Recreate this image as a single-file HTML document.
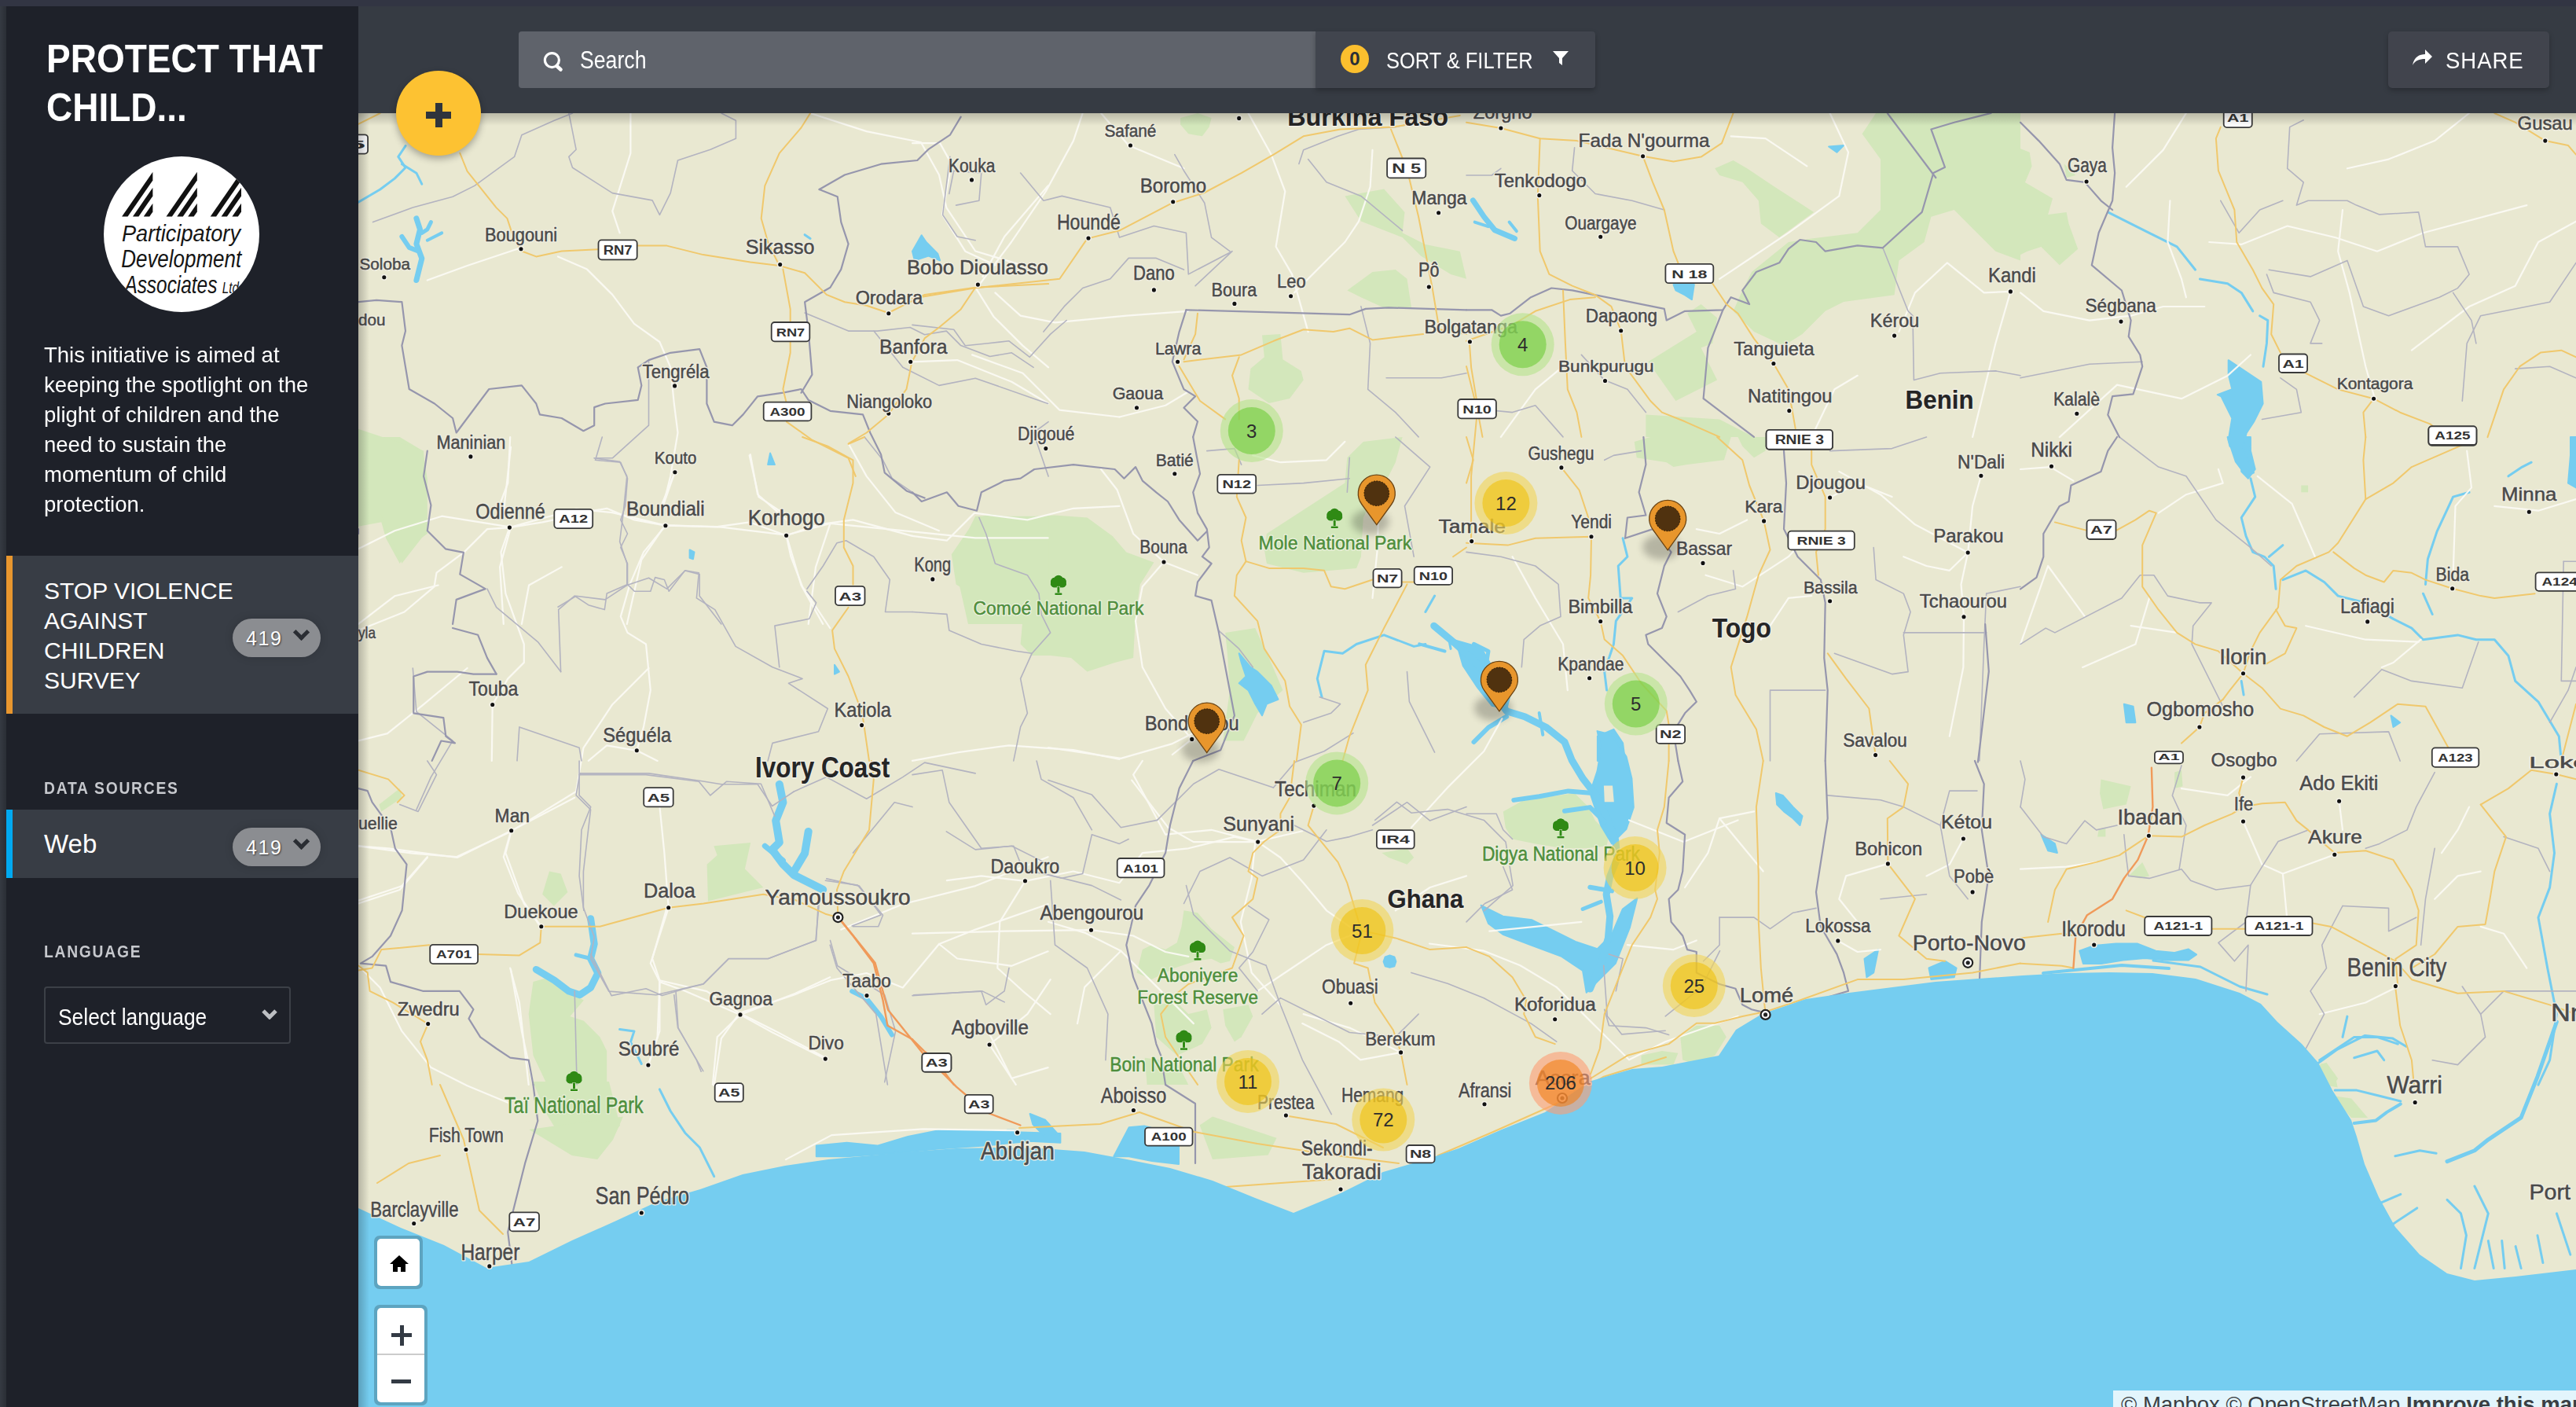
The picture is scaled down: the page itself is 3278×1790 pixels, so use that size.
<!DOCTYPE html>
<html><head><meta charset="utf-8">
<style>
*{margin:0;padding:0;box-sizing:border-box}
html,body{width:3278px;height:1790px;overflow:hidden;background:#323543;font-family:"Liberation Sans",sans-serif}
#lstrip{position:absolute;left:0;top:8px;width:8px;height:1782px;background:linear-gradient(90deg,#353a42,#2a2e35)}
#side{position:absolute;left:8px;top:8px;width:448px;height:1782px;background:#1e2129;color:#fff;z-index:5}
#topbar{position:absolute;left:456px;top:8px;width:2822px;height:136px;background:#363b43;z-index:4}
#map{position:absolute;left:456px;top:144px;width:2822px;height:1646px;background:#ebe8d6;overflow:hidden}
#mapsvg{position:absolute;left:0;top:0}
.t{position:absolute;white-space:nowrap}
.badge{position:absolute;width:112px;height:49px;border-radius:25px;background:#8b8d91;box-shadow:0 0 12px rgba(0,0,0,.15)}
.badge span{position:absolute;left:17px;top:10px;font-size:25px;line-height:30px;color:#fff;text-shadow:1px 1px 2px rgba(0,0,0,.6);letter-spacing:1.6px}
.badge i{position:absolute;left:77px;top:13px;width:20px;height:14px;background:none}
.badge i:before{content:"";position:absolute;left:3px;top:-3px;width:10px;height:10px;border-right:5px solid #2a2d33;border-bottom:5px solid #2a2d33;transform:rotate(45deg)}
.lbl{font-size:22px;font-weight:bold;color:#c6c8cd;letter-spacing:2px;line-height:28px;transform:scaleX(0.876);transform-origin:0 0}

</style></head><body>
<div id="lstrip"></div>
<div id="side">
<div class="t" id="title" style="left:51px;top:36px;font-size:50px;font-weight:bold;line-height:62px;transform:scaleX(0.92);transform-origin:0 0">PROTECT THAT<br>CHILD...</div>
<div id="logo" style="position:absolute;left:124px;top:191px;width:198px;height:198px;border-radius:50%;background:#fff;overflow:hidden">
<svg width="198" height="198" viewBox="132 199 198 198" style="position:absolute;left:0;top:0" font-family="Liberation Sans, sans-serif" font-style="italic">
<g fill="#111"><polygon points="155.1,275.5 194.4,218.7 194.4,229.4 162.5,275.5"/><polygon points="169.0,275.5 194.4,238.7 194.4,249.4 176.4,275.5"/><polygon points="182.8,275.5 194.4,258.7 194.4,269.4 190.2,275.5"/><polygon points="211.5,275.5 250.8,218.7 250.8,229.4 218.9,275.5"/><polygon points="225.3,275.5 250.8,238.7 250.8,249.4 232.8,275.5"/><polygon points="239.2,275.5 250.8,258.7 250.8,269.4 246.6,275.5"/><polygon points="267.7,275.5 307.0,218.7 307.0,229.4 275.1,275.5"/><polygon points="281.6,275.5 307.0,238.7 307.0,249.4 288.9,275.5"/><polygon points="295.4,275.5 307.0,258.7 307.0,269.4 302.8,275.5"/></g>
<text x="155" y="306.6" font-size="29" fill="#151515" textLength="151" lengthAdjust="spacingAndGlyphs">Participatory</text>
<text x="154.2" y="340" font-size="31" fill="#151515" textLength="153" lengthAdjust="spacingAndGlyphs">Development</text>
<text x="158.4" y="372.7" font-size="32" fill="#151515" textLength="118" lengthAdjust="spacingAndGlyphs">Associates</text>
<text x="282.8" y="372.7" font-size="20" fill="#151515" textLength="21" lengthAdjust="spacingAndGlyphs">Ltd</text>
</svg>
</div>
<div class="t" id="desc" style="left:48px;top:425px;font-size:28px;line-height:38px;transform:scaleX(0.982);transform-origin:0 0">This initiative is aimed at<br>keeping the spotlight on the<br>plight of children and the<br>need to sustain the<br>momentum of child<br>protection.</div>
<div id="cat" style="position:absolute;left:0;top:699px;width:448px;height:201px;background:#383d45;border-left:8px solid #e8962e"></div>
<div class="t" id="cattxt" style="left:48px;top:725px;font-size:30px;line-height:38px">STOP VIOLENCE<br>AGAINST<br>CHILDREN<br>SURVEY</div>
<div class="badge" style="left:288px;top:779px"><span>419</span><i></i></div>
<div class="t lbl" style="left:48px;top:981px">DATA SOURCES</div>
<div id="web" style="position:absolute;left:0;top:1022px;width:448px;height:87px;background:#383d45;border-left:8px solid #00a9f1"></div>
<div class="t" style="left:48px;top:1047px;font-size:33px;line-height:38px">Web</div>
<div class="badge" style="left:288px;top:1045px"><span>419</span><i></i></div>
<div class="t lbl" style="left:48px;top:1189px">LANGUAGE</div>
<div id="sel" style="position:absolute;left:48px;top:1247px;width:314px;height:73px;border:2px solid #3c4047;border-radius:4px"></div>
<div class="t" style="left:66px;top:1269px;font-size:29px;line-height:34px;transform:scaleX(0.91);transform-origin:0 0">Select language</div>
<svg style="position:absolute;left:325px;top:1275px" width="20" height="14" viewBox="0 0 20 14"><path d="M2,3 L10,11 L18,3" stroke="#bdbfc3" stroke-width="5" fill="none"/></svg>
</div>
<div id="topbar">
<div id="search" style="position:absolute;left:204px;top:32px;width:1014px;height:72px;background:#5f636b;border-radius:4px 0 0 4px"></div>
<svg style="position:absolute;left:234px;top:56.5px" width="28" height="28" viewBox="0 0 28 28"><circle cx="12.4" cy="11.6" r="9" stroke="#fff" stroke-width="3.2" fill="none"/><path d="M18.5,19 L23.5,23.5" stroke="#fff" stroke-width="4.6" stroke-linecap="round"/></svg>
<div class="t" style="left:282px;top:52px;font-size:31px;line-height:34px;color:#fff;transform:scaleX(0.86);transform-origin:0 0">Search</div>
<div id="sortf" style="position:absolute;left:1218px;top:32px;width:356px;height:72px;background:#41454e;border-radius:0 4px 4px 0;box-shadow:0 3px 6px rgba(0,0,0,.25)"></div>
<div style="position:absolute;left:1250px;top:49px;width:36px;height:36px;border-radius:50%;background:#fbbf2e;color:#2b2f36;font-weight:bold;font-size:24px;line-height:36px;text-align:center">0</div>
<div class="t" style="left:1308px;top:52px;font-size:29px;line-height:34px;color:#fff;transform:scaleX(0.877);transform-origin:0 0">SORT &amp; FILTER</div>
<svg style="position:absolute;left:1519px;top:57px" width="22" height="20" viewBox="0 0 22 20"><path d="M1,0 L21,0 L13,9 L13,18 L9,15 L9,9 Z" fill="#fff"/></svg>
<div id="share" style="position:absolute;left:2583px;top:32px;width:205px;height:72px;background:#41444d;border-radius:5px;box-shadow:0 3px 6px rgba(0,0,0,.25)"></div>
<svg style="position:absolute;left:2614px;top:54px" width="26" height="22" viewBox="0 0 26 22"><path d="M0,21 C2,10 9,7 16,7 L16,1 L25,10 L16,19 L16,13 C9,13 3,15 0,21 Z" fill="#fff"/></svg>
<div class="t" style="left:2656px;top:52px;font-size:29px;line-height:34px;color:#fff;letter-spacing:1px;transform:scaleX(0.95);transform-origin:0 0">SHARE</div>
</div>
<div id="fab" style="position:absolute;left:504px;top:90px;width:108px;height:108px;border-radius:50%;background:#fdc232;z-index:6;box-shadow:0 4px 10px rgba(0,0,0,.3)">
<div style="position:absolute;left:38px;top:52px;width:32px;height:9px;background:#2f343c"></div>
<div style="position:absolute;left:49.5px;top:41px;width:9px;height:31px;background:#2f343c"></div>
</div>
<div id="map">
<svg id="mapsvg" width="2822" height="1646" viewBox="456 144 2822 1646">
<defs><filter id="blur4" x="-50%" y="-50%" width="200%" height="200%"><feGaussianBlur stdDeviation="5"/></filter><linearGradient id="topsh" x1="0" y1="0" x2="0" y2="1"><stop offset="0" stop-color="#000" stop-opacity=".2"/><stop offset="1" stop-color="#000" stop-opacity="0"/></linearGradient><linearGradient id="leftsh" x1="0" y1="0" x2="1" y2="0"><stop offset="0" stop-color="#000" stop-opacity=".22"/><stop offset="1" stop-color="#000" stop-opacity="0"/></linearGradient></defs>
<rect x="456" y="144" width="2822" height="1646" fill="#e9e8d1"/>
<g fill="#d3e7bb">
<polygon points="1502.1,149.9 1524.0,144.0 1541.6,149.9 1538.7,161.6 1529.9,173.3 1512.3,170.3 1502.1,158.6"/>
<polygon points="1711.4,249.4 1761.2,240.6 1787.5,269.9 1784.6,296.2 1813.9,310.9 1857.8,319.7 1866.0,354.8 1846.1,348.9 1808.0,325.5 1784.6,302.1 1731.9,281.6"/>
<polygon points="1714.3,369.4 1746.5,346.0 1775.8,343.1 1790.5,354.8 1796.3,392.9 1764.1,392.9 1731.9,378.2"/>
<polygon points="1606.0,426.5 1629.4,425.1 1632.4,457.3 1655.8,471.9 1658.7,483.6 1641.1,507.0 1614.8,512.9 1588.5,495.3 1591.4,469.0 1608.9,454.3"/>
<polygon points="2182.2,214.3 2205.6,204.0 2223.2,214.3 2258.3,237.7 2308.1,269.9 2264.2,302.1 2240.8,284.5 2237.8,255.3 2217.3,231.8 2188.1,223.0"/>
<polygon points="2229.0,346.0 2275.9,308.0 2305.2,303.6 2363.7,296.2 2393.0,267.0 2393.0,202.6 2369.6,170.3 2387.1,144.0 2571.0,144.0 2571.0,331.4 2539.4,319.7 2510.1,290.4 2486.7,267.0 2457.4,275.7 2448.6,308.0 2416.4,331.4 2410.6,375.3 2346.1,384.1 2322.7,395.8 2293.5,425.1 2270.0,439.7 2232.0,422.1 2205.6,395.8 2217.3,369.4"/>
<polygon points="2147.1,398.7 2164.6,387.0 2185.1,404.6 2179.3,436.8 2164.6,442.6 2185.1,483.6 2132.4,510.0 2097.3,460.2 2158.8,422.1"/>
<polygon points="2094.4,527.5 2188.1,533.4 2232.0,555.9 2094.4,555.9"/>
<polygon points="2568.1,187.9 2582.7,193.8 2585.6,211.4 2576.9,231.9 2612.0,252.4 2606.1,272.9 2629.6,269.9 2632.5,284.6 2644.2,316.8 2620.8,337.3 2597.4,313.9 2579.8,319.7 2568.1,325.6"/>
<polygon points="2626.6,208.4 2641.3,223.1 2629.6,226.0"/>
<polygon points="453.1,556.0 508.7,556.0 538.0,573.6 543.8,608.7 543.8,679.0 523.3,693.6 508.7,717.0 491.1,684.8 485.3,664.3 453.1,670.2"/>
<polygon points="1210.8,705.3 1243.0,658.5 1260.5,654.1 1292.7,658.5 1342.5,655.5 1383.5,658.5 1415.7,681.9 1433.3,702.4 1468.4,715.6 1450.8,743.4 1445.0,784.4 1442.1,837.1 1418.6,842.9 1383.5,854.6 1363.0,837.1 1336.7,834.1 1313.2,834.1 1298.6,819.5 1301.5,787.3 1286.9,766.8 1278.1,758.0 1240.0,758.0 1216.6,743.4"/>
<polygon points="1611.9,679.0 1711.4,614.6 1714.3,582.3 1734.8,561.9 1784.6,556.0 1775.8,588.2 1767.0,605.8 1749.5,629.2 1734.8,658.5 1731.9,708.2 1726.1,722.9 1658.7,728.7 1611.9,717.0 1608.9,699.5"/>
<polygon points="1559.2,804.9 1597.2,799.0 1614.8,837.1 1632.4,878.1 1600.2,907.3 1582.6,942.5 1556.2,942.5 1565.0,878.1 1562.1,834.1"/>
<polygon points="2079.7,561.9 2100.2,556.0 2202.7,556.0 2193.9,585.3 2147.1,591.1 2129.5,594.1 2120.7,588.2 2082.7,582.3"/>
<polygon points="2211.5,556.0 2246.6,556.0 2246.6,573.6 2232.0,582.3 2217.3,567.7"/>
<polygon points="2928.3,617.5 2937.1,617.5 2937.1,626.3 2928.3,626.3"/>
<polygon points="908.3,1076.3 955.2,1071.9 947.9,1105.6 971.3,1129.0 901.0,1146.6 899.6,1099.7 912.7,1088.0"/>
<polygon points="699.0,1108.5 713.6,1111.5 722.4,1134.9 704.9,1152.4 690.2,1137.8"/>
<polygon points="678.5,1249.1 699.0,1243.2 719.5,1260.8 742.9,1272.5 725.4,1293.0 742.9,1298.8 763.4,1319.3 772.2,1336.9 772.2,1379.9 696.1,1379.9 678.5,1342.8 672.7,1290.1"/>
<polygon points="482.3,1023.6 508.7,1003.1 511.6,1014.8 485.3,1032.4"/>
<polygon points="1506.5,1158.3 1524.0,1161.2 1541.6,1181.7 1570.9,1205.1 1565.0,1222.7 1553.3,1225.6 1541.6,1219.8 1521.1,1222.7 1494.8,1231.5 1465.5,1246.1 1446.5,1237.4 1453.8,1208.1 1465.5,1202.2 1483.1,1208.1 1497.7,1199.3 1503.5,1178.8"/>
<polygon points="1468.4,1278.3 1497.7,1275.4 1512.3,1290.1 1535.8,1284.2 1541.6,1307.6 1529.9,1328.1 1497.7,1342.8 1471.3,1319.3"/>
<polygon points="1556.2,1284.2 1588.5,1278.3 1594.3,1293.0 1579.7,1319.3 1570.9,1325.2 1559.2,1304.7"/>
<polygon points="1456.7,1345.7 1497.7,1351.5 1512.3,1379.9 1459.6,1379.9"/>
<polygon points="1758.3,1085.1 1790.5,1079.3 1799.2,1091.0 1790.5,1099.7 1767.0,1091.0"/>
<polygon points="1912.8,1032.4 1939.2,1017.8 1983.1,1011.9 2003.6,1009.0 2021.2,1026.6 2030.0,1044.1 2047.5,1061.7 2044.6,1076.3 2018.2,1079.3 1989.0,1079.3 1953.8,1073.4 1924.6,1067.5 1915.8,1052.9"/>
<polygon points="2138.3,1319.3 2158.8,1304.7 2188.1,1304.7 2196.8,1319.3 2182.2,1342.8 2158.8,1354.5 2141.2,1348.6"/>
<polygon points="2088.5,1342.8 2114.9,1336.9 2135.4,1339.8 2129.5,1354.5 2088.5,1354.5"/>
<polygon points="2673.5,991.4 2711.6,1000.2 2705.7,1023.6 2676.4,1029.5 2672.0,1009.0"/>
<polygon points="2708.7,1114.4 2726.2,1096.9 2735.0,1114.4 2723.3,1117.4"/>
<polygon points="2670.6,1055.9 2679.4,1052.9 2679.4,1064.6 2669.1,1064.6"/>
<polygon points="2767.2,982.6 2776.0,979.7 2777.5,1000.2 2767.2,1003.1"/>
<polygon points="2951.7,1354.6 2960.5,1351.7 2975.2,1372.2 2969.3,1380.1 2951.7,1380.1"/>
<polygon points="456.0,545.8 539.1,573.6 543.8,675.2 511.4,716.7 483.7,652.1 456.0,652.1"/>
<polygon points="1241.2,656.7 1334.1,656.7 1334.1,793.9 1232.0,793.9 1213.5,712.1"/>
<polygon points="678.0,1376.0 775.0,1376.0 789.0,1432.0 756.0,1469.0 724.0,1464.0 696.0,1418.0"/>
<polygon points="1526.6,1431.5 1543.0,1420.6 1624.5,1447.8 1613.6,1469.6 1543.0,1475.0"/>
<polygon points="673.4,1437.0 793.0,1420.6 780.0,1450.0 760.3,1475.0 727.7,1470.0"/>
<polygon points="2953.8,1352.2 2971.2,1366.2 2974.7,1383.6 2957.3,1380.1"/>
<polygon points="2967.7,1394.0 2992.1,1397.5 3013.0,1421.9 2992.1,1421.9"/>
</g>
<g fill="#75cdf0" stroke="#75cdf0" stroke-width="2" stroke-linejoin="round">
<polygon points="1161.0,319.7 1172.7,299.2 1178.6,308.0 1193.2,322.6 1196.1,331.4 1181.5,325.5 1163.9,331.4"/>
<polygon points="2129.5,362.1 2155.8,362.1 2152.9,381.1 2144.1,375.3 2132.4,369.4"/>
<polygon points="2327.1,186.5 2346.1,185.0 2337.4,193.8"/>
<polygon points="877.6,699.5 883.5,702.4 882.0,711.2 877.6,709.7"/>
<polygon points="980.1,576.5 985.9,591.1 977.1,591.1"/>
<polygon points="1062.0,845.8 1067.9,854.6 1062.0,857.6"/>
<polygon points="1576.7,831.2 1591.4,848.8 1600.2,854.6 1617.7,872.2 1626.5,889.8 1611.9,895.6 1606.0,910.3 1597.2,895.6 1588.5,878.1 1576.7,869.3 1585.5,860.5 1579.7,842.9"/>
<polygon points="2032.9,936.6 2053.4,927.8 2065.1,945.4 2068.0,967.9 2032.9,967.9"/>
<polygon points="2834.6,556.0 2863.9,556.0 2863.9,573.6 2869.7,597.0 2860.9,608.7 2852.2,599.9 2852.2,579.4 2837.5,567.7"/>
<polygon points="3271.0,556.0 3278.0,556.0 3278.0,620.4 3268.0,614.6 3271.0,579.4"/>
<polygon points="2702.8,895.7 2714.5,898.7 2717.4,919.2 2705.7,919.2"/>
<polygon points="3042.5,910.4 3054.2,919.2 3045.5,925.0"/>
<polygon points="1768.5,1215.4 1774.4,1217.4 1776.4,1223.3 1774.4,1229.2 1768.5,1230.9 1762.7,1229.2 1760.6,1223.3 1762.7,1217.4"/>
<polygon points="2259.8,1009.0 2268.6,1011.9 2281.7,1026.6 2293.5,1038.3 2290.5,1050.0 2281.7,1041.2 2270.0,1032.4 2261.2,1023.6"/>
<polygon points="2454.5,1231.5 2475.0,1222.7 2489.6,1231.5 2486.7,1243.2 2457.4,1246.1"/>
<polygon points="2372.5,1219.8 2390.1,1208.1 2384.2,1237.4 2375.4,1243.2"/>
<polygon points="2597.4,1061.7 2614.9,1073.4 2617.9,1085.1 2606.1,1082.2"/>
<polygon points="1038.8,1457.6 1077.6,1453.8 1116.5,1457.6 1155.3,1446.0 1194.1,1438.2 1252.3,1438.2 1291.1,1440.2 1349.4,1442.1 1349.4,1453.8 1310.6,1451.8 1252.3,1457.6 1194.1,1461.5 1135.9,1467.3 1077.6,1471.2 1038.8,1471.2"/>
<polygon points="1417.3,1471.2 1436.7,1434.3 1456.1,1432.4 1500.0,1444.1 1500.0,1480.9 1465.8,1477.0 1436.7,1471.2"/>
<polygon points="1310.6,1416.9 1330.0,1424.6 1347.4,1444.1 1330.0,1446.0 1314.4,1430.5"/>
<polygon points="2835.7,458.2 2849.6,467.4 2877.3,485.9 2879.6,513.6 2868.0,536.7 2858.8,550.6 2854.2,569.0 2868.0,601.4 2858.8,606.0 2844.9,587.5 2835.7,559.8 2840.3,532.1 2826.5,504.4 2821.8,502.1 2840.3,495.1 2835.7,476.6"/>
<polygon points="2646.3,1209.8 2664.8,1202.9 2692.5,1200.6 2720.2,1200.6 2743.3,1209.8 2766.4,1212.1 2784.9,1207.5 2795.0,1214.4 2784.9,1221.4 2757.2,1221.4 2729.4,1219.0 2701.7,1221.4 2674.0,1226.0 2650.9,1226.0"/>
<polygon points="1852.4,814.7 1884.8,823.9 1903.2,856.2 1921.7,883.9 1917.1,902.4 1898.6,897.8 1880.1,874.7 1861.7,847.0"/>
<polygon points="2032.6,930.1 2051.0,934.8 2069.5,962.5 2076.4,990.2 2078.8,1027.1 2069.5,1054.8 2051.0,1073.3 2037.2,1050.2 2023.3,1008.7 2032.6,980.9 2037.2,953.2"/>
<polygon points="1884.8,1151.8 1912.5,1165.7 1949.4,1170.3 1977.1,1184.2 2004.8,1198.0 2032.6,1207.3 2051.0,1188.8 2064.9,1156.5 2083.4,1142.6 2074.1,1179.6 2055.7,1225.8 2032.6,1248.8 2018.7,1262.7 2014.1,1235.0 1986.4,1216.5 1949.4,1202.7 1912.5,1188.8 1894.0,1174.9"/>
<polygon fill="#e9e8d1" stroke="none" points="2040.9,999.4 2052.0,999.4 2053.8,1020.2 2041.8,1020.2"/>
</g>
<g fill="none" stroke="#75cdf0" stroke-linecap="round" stroke-linejoin="round">
<polyline stroke-width="9" points="1824.7,796.2 1852.4,819.3 1875.5,840.1 1894.0,860.9 1905.5,888.6 1917.1,904.7 1940.2,911.7 1967.9,925.5 1991.0,944.0 2000.2,967.1 2014.1,990.2 2030.3,1011.0 2044.1,1038.7 2055.7,1068.7 2058.0,1091.8 2048.7,1114.9 2044.1,1138.0 2048.7,1165.7 2046.4,1193.4 2037.2,1225.8 2023.3,1258.1"/>
<polyline stroke-width="4" points="1806.2,819.3 1838.6,828.5"/>
<polyline stroke-width="5" points="1875.5,819.3 1894.0,828.5 1889.4,856.2"/>
<polyline stroke-width="6" points="1875.5,944.0 1894.0,925.5 1917.1,911.7"/>
<polyline stroke-width="4" points="1958.7,907.0 1963.3,934.8"/>
<polyline stroke-width="6" points="1926.3,1017.9 1958.7,1013.3 1995.6,1006.4 2023.3,1008.7"/>
<polyline stroke-width="6" points="1991.0,1031.8 2023.3,1027.1 2041.8,1045.6"/>
<polyline stroke-width="6" points="2023.3,1128.8 2051.0,1133.4"/>
<polyline stroke-width="5" points="2014.1,1156.5 2037.2,1147.2"/>
<polyline stroke-width="4" points="2600.0,1238.0 2700.0,1228.0 2760.0,1232.0"/>
<polyline stroke-width="3" points="2950.3,1352.2 2974.7,1334.8 3009.5,1317.4 3044.4,1320.9 3061.8,1331.3"/>
<polyline stroke-width="3" points="2971.2,1387.1 2999.1,1387.1 3027.0,1394.0 3054.8,1401.0"/>
<polyline stroke-width="4" points="2995.6,1428.9 3023.5,1425.4 3037.4,1414.9 3054.8,1404.5"/>
<polyline stroke-width="3" points="3047.9,1470.7 3079.2,1463.7 3100.1,1467.2"/>
<polyline stroke-width="3" points="3030.4,1529.9 3054.8,1519.4"/>
<polyline stroke-width="3" points="3044.4,1557.7 3075.7,1536.9"/>
<polyline stroke-width="3" points="3114.0,1526.4 3131.5,1543.8 3138.4,1571.7 3131.5,1613.5"/>
<polyline stroke-width="3" points="3148.9,1509.0 3166.3,1543.8 3148.9,1613.5"/>
<polyline stroke-width="3" points="3166.3,1578.6 3173.2,1613.5"/>
<polyline stroke-width="3" points="3183.7,1578.6 3187.2,1613.5"/>
<polyline stroke-width="3" points="3201.1,1585.6 3208.1,1613.5"/>
<polyline stroke-width="3" points="3229.0,1571.7 3235.9,1606.5"/>
<polyline stroke-width="3" points="3253.4,1543.8 3270.8,1596.1"/>
<polyline stroke-width="5" points="3253.4,1300.0 3229.0,1369.7 3208.1,1421.9 3166.3,1449.8 3148.9,1463.7 3114.0,1477.6"/>
<polyline stroke-width="3" points="2740.0,1222.0 2800.0,1230.0 2850.0,1255.0 2885.0,1265.0"/>
<polyline stroke-width="7" points="529.9,277.9 534.5,291.8 529.9,310.3 536.8,328.8 529.9,356.5"/>
<polyline stroke-width="6" points="511.4,301.0 520.7,314.9 532.2,319.5"/>
<polyline stroke-width="5" points="548.4,282.6 543.8,291.8 536.8,296.4"/>
<polyline stroke-width="4" points="562.2,296.4 543.8,305.7"/>
<polyline stroke-width="7" points="1874.4,254.9 1888.3,275.6 1902.1,292.7 1927.5,303.4"/>
<polyline stroke-width="4" points="1876.7,282.6 1893.8,288.1"/>
<polyline stroke-width="4" points="1920.6,282.6 1929.8,294.1"/>
<polyline stroke-width="10" points="991.8,997.8 996.4,1020.9 987.2,1044.0 991.8,1071.7 982.6,1080.9 996.4,1099.4 1010.3,1113.3 1028.7,1122.5 1047.2,1131.8"/>
<polyline stroke-width="10" points="1028.7,1057.9 1024.1,1085.6 1010.3,1108.7"/>
<polyline stroke-width="7" points="973.3,1076.3 996.4,1094.8"/>
<polyline stroke-width="9" points="751.6,1168.7 756.2,1201.0 751.6,1219.5 760.8,1238.0 751.6,1256.5 737.8,1265.7 723.9,1261.1 705.4,1247.2 682.3,1233.4"/>
<polyline stroke-width="5" points="733.1,1214.9 751.6,1219.5"/>
<polyline stroke-width="6" points="1084.2,1261.1 1102.7,1270.3 1121.1,1293.4 1135.0,1316.5"/>
<polyline stroke-width="3" points="788.6,1309.6 807.0,1311.9 802.4,1325.8 811.7,1344.2 816.3,1353.5"/>
<polyline stroke-width="3" points="839.4,1385.8 853.2,1413.5 871.7,1441.2 890.2,1459.7 908.7,1496.7"/>
<polyline stroke-width="3" points="1281.4,1438.2 1291.1,1438.2"/>
<polyline stroke-width="3" points="2682.3,269.9 2711.6,284.6 2735.0,296.3 2770.2,313.9 2793.6,343.2"/>
<polyline stroke-width="3" points="2799.4,354.9 2834.6,360.7 2852.2,372.4 2866.8,395.9"/>
<polyline stroke-width="3" points="2875.6,401.7 2885.8,407.6 2884.4,436.9 2880.0,466.2"/>
<polyline stroke-width="3" points="1682.1,886.8 1676.3,863.4 1685.1,828.3 1708.5,831.2 1726.1,819.5 1761.2,807.8 1799.2,822.4 1813.9,819.5"/>
<polyline stroke-width="3" points="1813.9,778.5 1825.6,758.0"/>
<polyline stroke-width="3" points="1825.6,796.1 1843.2,810.7 1846.1,825.4"/>
<polyline stroke-width="3" points="2065.1,684.8 2070.9,708.2 2059.2,720.0 2062.2,760.9 2076.8,760.9 2056.3,790.2 2053.4,819.5 2041.7,854.6 2044.6,878.1"/>
<polyline stroke-width="3" points="2863.9,608.7 2869.7,632.1 2852.2,658.5 2858.0,681.9 2866.8,702.4 2881.4,708.3 2893.2,720.0 2896.1,749.3"/>
<polyline stroke-width="3" points="2887.3,708.3 2904.9,693.7"/>
<polyline stroke-width="3" points="2904.9,737.6 2934.2,725.9 2957.6,740.5 2975.2,758.1 3010.3,766.9 3045.5,787.4 3068.9,799.1 3083.5,813.7 3127.5,807.9 3150.9,813.7 3174.3,813.7 3191.9,834.2 3200.7,866.4 3230.0,892.8 3256.3,936.7 3259.3,968.1"/>
<polyline stroke-width="3" points="3142.1,626.3 3121.6,632.1 3101.1,676.1 3089.4,711.2 3086.5,743.4"/>
<polyline stroke-width="3" points="3083.5,755.2 3095.2,781.5"/>
<polyline stroke-width="3" points="3191.9,605.8 3209.5,594.1 3221.2,588.2"/>
<polyline stroke-width="3" points="2852.2,866.4 2855.1,884.0"/>
<polyline stroke-width="3" points="3253.4,997.3 3244.6,1035.4 3250.5,1085.1 3244.6,1129.1 3230.0,1167.2 3241.7,1231.6 3253.4,1290.2 3244.6,1348.7 3230.0,1380.1"/>
<polyline stroke-width="3" points="2951.7,1348.7 2995.7,1319.4 3025.0,1319.4 3051.3,1328.2"/>
<polyline stroke-width="3" points="2986.9,1293.1 2981.0,1319.4"/>
<polyline stroke-width="3" points="2995.7,1345.8 3025.0,1337.0 3033.7,1348.7"/>
<polyline stroke-width="3" points="516.0,185.6 506.8,199.4 516.0,213.3 502.2,227.1 483.7,241.0 456.0,257.2"/>
<polyline stroke-width="3" points="511.4,208.7 529.9,220.2 536.8,234.1"/>
<polyline stroke-width="3" points="1024.1,298.7 1031.1,303.4"/>
</g>
<g fill="none" stroke-linecap="round" stroke-linejoin="round">
<g stroke="#fbfaf4" stroke-width="2.2" opacity=".95">
<polyline points="1377.7,144.0 1365.9,179.1 1330.8,243.5 1286.9,308.0 1243.0,366.5"/>
<polyline points="1266.4,372.4 1298.6,401.6 1342.5,410.4 1433.3,401.6 1512.3,395.8"/>
<polyline points="1588.5,144.0 1617.7,196.7 1635.3,243.5 1623.6,313.8 1644.1,348.9 1664.6,422.1"/>
<polyline points="1647.0,372.4 1693.8,325.5 1711.4,308.0 1729.0,281.6 1743.6,237.7 1746.5,190.8"/>
<polyline points="1161.0,182.1 1196.1,182.1 1210.8,208.4 1199.1,272.8 1228.3,319.7 1266.4,337.2"/>
<polyline points="1401.1,144.0 1436.2,185.0 1506.5,214.3"/>
<polyline points="1424.5,530.5 1483.1,515.8 1512.3,498.3"/>
<polyline points="1237.1,451.4 1301.5,474.8 1348.4,521.7 1424.5,530.5"/>
<polyline points="2188.1,354.8 2232.0,325.5 2275.9,296.2 2340.3,249.4 2352.0,193.8 2328.6,144.0"/>
<polyline points="2416.4,422.1 2436.9,372.4 2477.9,334.3 2524.7,372.4 2558.4,370.9 2539.4,436.8 2510.1,555.9"/>
<polyline points="2202.7,173.3 2246.6,176.2 2299.3,211.3"/>
<polyline points="1909.9,555.9 1953.8,495.3 1989.0,466.1"/>
<polyline points="2305.2,555.9 2334.4,495.3 2363.7,477.8"/>
<polyline points="2571.0,372.4 2600.3,395.9 2658.9,407.6 2711.6,401.7 2752.6,390.0 2805.3,390.0"/>
<polyline points="2705.7,237.7 2752.6,190.9 2781.9,144.0"/>
<polyline points="2761.4,255.3 2758.4,308.0 2776.0,354.9 2781.9,378.3"/>
<polyline points="2811.2,308.0 2852.2,310.9 2910.7,287.5 2972.2,302.2 3025.0,319.7 3083.5,296.3 3215.3,261.1"/>
<polyline points="2986.9,214.3 3039.6,202.6 3098.2,179.1 3142.1,144.0"/>
<polyline points="2981.0,267.0 2975.2,319.7 2989.8,372.4 3010.3,466.2 3022.0,507.2"/>
<polyline points="3278.0,281.7 3230.0,308.0 3200.7,363.7 3142.1,390.0 3068.9,445.7"/>
<polyline points="2620.8,556.1 2694.0,489.6 2776.0,507.2 2834.6,477.9 2863.9,451.5"/>
<polyline points="456.0,801.9 514.6,778.5 552.6,746.3 555.5,728.7 590.7,702.4 620.0,673.1 648.4,671.1 690.2,664.3 704.9,661.4"/>
<polyline points="755.2,649.7 772.2,646.8 807.3,661.4 846.9,668.7 912.7,670.2 953.7,664.3 1000.6,681.3 1041.5,667.3 1085.5,661.4 1161.0,681.9"/>
<polyline points="648.4,671.1 637.5,702.4 643.4,755.1 666.8,819.5 666.8,842.9 646.3,863.4 626.7,896.5 625.8,967.9"/>
<polyline points="846.9,668.7 819.0,702.4 801.5,743.4 789.8,784.4 798.5,804.9 822.0,819.5 827.8,878.1 819.0,924.9 810.3,954.8"/>
<polyline points="858.9,600.8 842.5,640.9"/>
<polyline points="1000.6,681.3 1006.4,708.2 1021.1,746.3 1056.2,799.0"/>
<polyline points="953.7,579.4 965.4,632.1 991.8,649.7"/>
<polyline points="649.2,556.0 646.3,614.6 637.5,638.0"/>
<polyline points="748.8,967.9 772.2,948.3 810.3,954.8 836.6,967.9"/>
<polyline points="1161.0,681.9 1204.9,687.7 1240.0,652.6 1307.4,661.4 1365.9,646.8 1424.5,643.8"/>
<polyline points="1401.1,597.0 1421.6,623.3 1442.1,679.0 1481.0,715.0 1524.0,731.7"/>
<polyline points="1481.0,715.0 1453.8,746.3 1445.0,790.2 1453.8,848.8 1483.1,901.5 1516.7,940.4"/>
<polyline points="1161.0,967.9 1219.6,957.1 1284.0,948.3 1365.9,954.2 1424.5,965.9"/>
<polyline points="1516.7,940.4 1491.8,960.0"/>
<polyline points="1594.3,579.4 1629.4,588.2 1688.0,585.3 1711.4,561.9"/>
<polyline points="1755.3,629.2 1752.4,702.4 1746.5,760.9"/>
<polyline points="2158.8,673.1 2188.1,679.0 2223.2,661.4"/>
<polyline points="2170.5,731.7 2217.3,746.3 2275.9,708.2 2305.2,676.0"/>
<polyline points="2340.3,599.9 2393.0,629.2 2436.9,667.3 2504.2,703.0"/>
<polyline points="2504.2,703.0 2480.8,725.8 2451.5,720.0 2422.3,708.2"/>
<polyline points="2504.2,703.0 2495.5,743.4 2499.0,784.7 2498.4,848.8 2480.8,936.6"/>
<polyline points="2328.6,633.0 2363.7,614.6 2407.6,632.1"/>
<polyline points="2520.9,605.2 2510.1,643.8 2504.2,703.0"/>
<polyline points="1924.6,708.2 1953.8,760.9 1989.0,819.5 1994.8,878.1"/>
<polyline points="2240.8,813.6 2275.9,760.9 2305.2,758.0"/>
<polyline points="2571.0,597.0 2609.1,594.1 2638.4,611.6"/>
<polyline points="2746.7,652.6 2781.9,629.2 2828.7,614.6 2822.9,597.0"/>
<polyline points="2872.7,605.8 2916.6,640.9 2945.9,708.3"/>
<polyline points="2571.0,819.6 2606.1,720.0 2653.0,784.4"/>
<polyline points="2711.6,796.2 2770.2,804.9"/>
<polyline points="2934.2,796.2 3010.3,813.7 3077.7,816.7"/>
<polyline points="3080.6,813.7 3045.5,843.0 3030.8,848.9"/>
<polyline points="3278.0,635.1 3230.0,649.7 3174.3,643.9"/>
<polyline points="3139.2,573.6 3145.0,620.4 3124.5,643.9 3121.6,731.7"/>
<polyline points="2650.1,848.9 2717.4,819.6 2735.0,761.0"/>
<polyline points="456.0,1076.3 494.1,1079.3 581.9,1091.0 650.7,1056.7 731.2,1014.8"/>
<polyline points="650.7,1056.7 643.4,1085.1 666.8,1149.5 688.8,1178.8"/>
<polyline points="850.7,1154.8 827.8,1225.6 839.5,1249.1 836.6,1319.3 824.9,1355.0"/>
<polyline points="839.5,1249.1 871.7,1260.8 942.0,1290.9 1012.3,1263.7 1056.2,1243.2"/>
<polyline points="942.0,1290.9 912.7,1319.3 906.9,1379.9"/>
<polyline points="1050.3,1347.1 983.0,1313.5 942.0,1290.9"/>
<polyline points="456.0,1149.5 508.7,1132.0 543.8,1091.0"/>
<polyline points="649.2,1231.5 660.9,1275.4 672.7,1379.9"/>
<polyline points="850.7,1154.8 845.4,1085.1 839.5,1026.6"/>
<polyline points="1161.0,1187.6 1278.1,1184.7 1388.5,1183.2 1442.1,1190.5 1483.1,1211.0 1512.3,1216.9"/>
<polyline points="1304.5,1120.8 1272.3,1172.9 1269.3,1231.5 1301.5,1260.8 1336.7,1290.1"/>
<polyline points="1204.9,1120.2 1248.8,1114.4 1304.5,1120.8 1365.9,1108.5 1424.5,1123.2 1453.8,1085.1 1512.3,1079.3 1570.9,1064.6 1600.7,1071.1"/>
<polyline points="1600.7,1071.1 1541.6,1055.8 1483.1,1061.7 1442.1,985.6 1453.8,968.0"/>
<polyline points="1600.7,1071.1 1629.4,1091.0 1658.7,1123.2 1688.0,1158.3 1717.3,1178.8"/>
<polyline points="1733.4,1184.1 1688.0,1202.2 1644.1,1231.5 1600.2,1260.8"/>
<polyline points="1782.6,1338.9 1717.3,1307.6 1658.7,1290.1"/>
<polyline points="1259.1,1329.0 1292.7,1379.9"/>
<polyline points="1259.1,1329.0 1307.4,1290.1 1336.7,1246.1"/>
<polyline points="1866.0,1114.4 1819.7,1129.0 1775.8,1158.3"/>
<polyline points="2188.1,1041.2 2173.4,1085.1 2144.1,1129.0"/>
<polyline points="2243.7,1108.5 2188.1,1041.2 2232.0,1032.4"/>
<polyline points="2402.4,1098.9 2349.1,1114.4 2340.3,1143.7 2363.7,1172.9"/>
<polyline points="2498.4,1067.0 2480.8,1099.7 2451.5,1114.4"/>
<polyline points="2338.8,1196.9 2363.7,1211.0 2393.0,1208.1"/>
<polyline points="1895.3,1184.7 1953.8,1178.8 2012.4,1172.9"/>
<polyline points="2070.9,1202.2 2129.5,1208.1 2158.8,1196.4"/>
<polyline points="2571.0,1105.7 2629.6,1102.7 2667.6,1096.9"/>
<polyline points="2776.0,1003.1 2834.6,1011.9 2863.9,988.5"/>
<polyline points="2854.5,1045.0 2878.5,1099.8 2904.9,1111.5 2970.8,1087.2"/>
<polyline points="2904.9,1111.5 2910.7,1173.0"/>
<polyline points="2976.6,1019.3 2981.0,1055.9"/>
<polyline points="3107.0,1085.1 3127.5,1055.9 3142.1,1026.6"/>
<polyline points="3098.2,1143.7 3127.5,1114.4 3156.7,1108.6"/>
<polyline points="3215.3,1231.6 3186.0,1187.7 3156.7,1178.9"/>
<polyline points="3051.3,1255.0 3010.3,1275.5 2951.7,1290.2"/>
<polyline points="2571.0,1255.0 2600.3,1260.9"/>
<polyline points="543.8,356.5 594.6,338.0 650.0,319.5 663.9,314.9"/>
<polyline points="710.0,326.4 747.0,342.6 779.3,374.9 807.0,411.9 839.4,435.0 853.2,467.3 857.8,513.5 862.5,550.5 853.2,605.9 844.0,642.8"/>
<polyline points="802.4,144.0 802.4,194.8 779.3,268.7 788.6,296.4"/>
<polyline points="456.0,698.3 502.2,675.2 562.2,656.7 650.0,670.6 733.1,647.5 779.3,652.1 846.3,668.2 917.9,670.6 1000.6,680.7 1056.5,665.9 1148.8,675.2 1241.2,684.4 1333.6,684.4"/>
<polyline points="650.0,670.6 636.1,721.4 640.8,793.9"/>
<polyline points="846.3,668.2 816.3,712.1 797.8,793.9"/>
<polyline points="858.8,600.4 844.0,642.8"/>
<polyline points="1000.6,680.7 1019.5,744.5 1047.2,793.9"/>
<polyline points="650.0,568.9 640.8,652.1"/>
<polyline points="954.8,578.2 964.1,629.0 1001.0,661.3"/>
<polyline points="1031.1,144.0 1102.7,167.1 1171.9,181.0 1195.0,222.5 1204.3,264.1 1241.2,319.5 1333.6,347.2"/>
<polyline points="1333.6,236.4 1278.2,301.0 1250.5,351.9"/>
<polyline points="1241.2,365.7 1264.3,402.7 1301.3,439.6 1334.1,467.3"/>
<polyline points="1160.4,460.4 1218.1,458.1 1287.4,485.8 1334.1,513.5"/>
<polyline points="1079.6,564.3 1102.7,605.9 1139.6,652.1 1195.0,675.2"/>
<polyline points="456.0,793.9 502.2,758.3 557.6,744.5"/>
<polyline points="663.9,793.9 673.1,744.5 714.7,721.4"/>
<polyline points="1056.5,665.9 1038.0,721.4 1028.7,793.9"/>
<polyline points="1334.0,951.0 1426.4,964.9 1491.0,946.4 1518.8,932.6"/>
<polyline points="1440.2,992.6 1486.4,1052.7 1518.8,1071.1 1597.3,1071.1 1657.3,1057.3"/>
<polyline points="1597.3,1071.1 1592.7,1117.3 1578.8,1172.8 1592.7,1237.4 1629.6,1279.0"/>
<polyline points="1657.3,1302.1 1703.5,1325.2 1731.2,1348.3 1782.0,1339.0"/>
<polyline points="1795.9,1052.7 1842.1,1001.9 1888.3,955.7 1911.4,914.1"/>
<polyline points="1819.0,1200.5 1888.3,1209.7 1934.5,1228.2 1980.7,1255.9"/>
<polyline points="1980.7,1255.9 2026.8,1302.1 2073.0,1348.3 2119.2,1325.2 2211.6,1292.8"/>
<polyline points="1334.0,1172.8 1380.2,1186.6 1426.4,1209.7 1472.6,1255.9 1518.8,1302.1"/>
<polyline points="1426.4,1209.7 1380.2,1255.9 1371.0,1302.1"/>
<polyline points="2073.0,1043.4 2142.3,1071.1 2211.6,1043.4"/>
<polyline points="456.0,1076.3 525.3,1085.6 580.7,1090.2 650.0,1057.9 733.1,1007.0"/>
<polyline points="650.0,1057.9 640.8,1090.2 659.2,1136.4 686.9,1177.9"/>
<polyline points="456.0,1145.6 511.4,1127.1 543.8,1090.2"/>
<polyline points="848.6,1154.8 830.1,1219.5 839.4,1247.2 839.4,1311.9 825.5,1353.5"/>
<polyline points="839.4,1247.2 899.4,1261.1 941.0,1288.8 1010.3,1265.7 1056.5,1247.2"/>
<polyline points="941.0,1288.8 917.9,1321.1 908.7,1381.2"/>
<polyline points="941.0,1288.8 987.2,1311.9 1051.8,1346.5"/>
<polyline points="1056.5,1247.2 1102.7,1238.0 1148.8,1256.5 1195.0,1201.0 1241.2,1182.6 1333.6,1150.2"/>
<polyline points="1195.0,1201.0 1218.1,1219.5 1287.4,1228.8 1333.6,1210.3"/>
<polyline points="1070.3,1182.6 1148.8,1150.2 1241.2,1127.1 1333.6,1090.2"/>
<polyline points="1259.7,1316.5 1287.4,1371.9 1333.6,1358.1"/>
<polyline points="456.0,1228.8 483.7,1256.5 511.4,1311.9 548.4,1358.1 594.6,1381.2 650.0,1404.3"/>
<polyline points="650.0,1233.4 663.9,1311.9 677.7,1376.6"/>
<polyline points="733.1,1007.0 742.4,951.6 779.3,896.2 825.5,850.0"/>
<polyline points="456.0,942.4 493.0,933.1 539.1,896.2 594.6,850.0"/>
<polyline points="1000.0,1475.1 1058.2,1444.1 1174.7,1436.3 1291.1,1438.2"/>
</g><g stroke="#b3b3c0" stroke-width="1.6">
<polyline points="1207.8,246.5 1213.7,217.2 1248.8,220.1 1245.9,255.3 1216.6,261.1"/>
<polyline points="1298.6,220.1 1327.9,255.3 1351.3,249.4 1412.8,264.0 1424.5,302.1 1468.4,287.5 1509.4,296.2 1512.3,348.9 1568.0,319.7 1521.1,363.6"/>
<polyline points="1494.8,196.7 1506.5,217.2 1532.8,258.2 1541.6,302.1 1565.0,319.7"/>
<polyline points="1327.9,422.1 1354.2,389.9 1377.7,366.5 1412.8,354.8 1436.2,328.4 1471.3,328.4 1506.5,343.1"/>
<polyline points="1161.0,413.4 1213.7,419.2 1228.3,439.7 1257.6,436.8 1284.0,433.8 1310.3,454.3 1336.7,425.1 1357.2,407.5"/>
<polyline points="1652.9,208.4 1658.7,190.8 1702.6,173.3 1729.0,164.5 1775.8,161.6 1805.1,155.7"/>
<polyline points="1664.6,202.6 1688.0,231.8 1731.9,249.4 1784.6,293.3"/>
<polyline points="1731.9,389.9 1743.6,436.8 1740.7,495.3 1775.8,524.6 1805.1,555.9"/>
<polyline points="1764.1,480.7 1834.4,480.7 1866.0,474.8"/>
<polyline points="2395.9,315.3 2428.1,395.8 2434.0,401.6 2435.4,483.6 2469.1,474.8 2539.4,471.9 2571.0,477.8"/>
<polyline points="1866.0,223.0 1898.2,223.0 1909.9,214.3"/>
<polyline points="2003.6,187.9 2000.7,217.2 2030.0,246.5 2076.8,255.3 2117.8,267.0"/>
<polyline points="2012.4,451.4 2041.7,483.6 2070.9,495.3 2094.4,524.6"/>
<polyline points="1866.0,518.8 1924.6,524.6 1953.8,515.8 1989.0,555.9"/>
<polyline points="2931.2,152.8 2913.7,161.6 2910.7,214.3 2931.2,231.9 2922.4,261.1 2937.1,255.3 2986.9,255.3 2998.6,261.1 3027.9,272.9 3077.7,269.9 3086.5,313.9 3127.5,313.9 3142.1,349.0 3127.5,366.6 3104.0,378.3 3039.6,401.7 3007.4,390.0 2986.9,331.4 2940.0,351.9 2887.3,343.2"/>
<polyline points="2825.8,255.3 2849.2,296.3 2875.6,267.0 2904.9,255.3"/>
<polyline points="2884.4,349.0 2893.2,372.4 2940.0,384.2 2951.7,407.6 2940.0,436.9 2954.7,436.9"/>
<polyline points="3133.3,510.1 3139.2,436.9 3156.7,401.7 3244.6,384.2 3278.0,334.4"/>
<polyline points="2571.0,480.8 2658.9,463.2 2726.2,460.3"/>
<polyline points="2901.9,480.8 2922.4,495.4 2928.3,524.7 2878.5,533.5"/>
<polyline points="3121.6,372.4 3145.0,407.6 3150.9,436.9"/>
<polyline points="3200.7,469.1 3244.6,466.2 3278.0,480.8"/>
<polyline points="757.6,585.3 789.8,588.2 798.5,608.7 795.6,643.8 789.8,661.4 798.5,679.0 789.8,696.5 798.5,717.0 798.5,743.4 772.2,755.1 769.3,775.6 748.8,769.7 731.2,758.0 710.7,775.6 713.6,854.6"/>
<polyline points="798.5,743.4 807.3,752.2 827.8,752.2 833.7,734.6 845.4,737.5 851.2,752.2 871.7,725.8 889.3,728.7 886.4,760.9 909.8,775.6 936.1,822.4 983.0,848.8 1021.1,863.4 1003.5,869.3 1053.3,901.5 1041.5,930.8 983.0,945.4 977.1,967.9"/>
<polyline points="1026.9,749.2 1047.4,720.0 1065.0,690.7 1076.7,687.7 1111.8,708.2 1132.3,737.5 1126.5,778.5 1161.0,778.5"/>
<polyline points="1100.1,556.0 1123.5,585.3 1135.2,608.7 1161.0,626.3"/>
<polyline points="1026.9,752.2 1038.6,766.8 1029.8,787.3 985.9,796.1 991.8,848.8"/>
<polyline points="620.0,749.2 631.7,772.7 684.4,816.6 713.6,854.6"/>
<polyline points="658.0,967.9 660.9,924.9 737.1,951.2 740.0,967.9"/>
<polyline points="766.3,556.0 757.6,585.3"/>
<polyline points="1161.0,778.5 1204.9,781.4 1207.8,801.9 1248.8,819.5 1292.7,828.3 1313.2,831.2 1336.7,804.9 1325.0,781.4 1322.0,755.1 1307.4,731.7 1266.4,717.0 1254.7,679.0 1245.9,658.5"/>
<polyline points="1313.2,831.2 1298.6,863.4 1307.4,907.3 1298.6,924.9 1289.8,967.9"/>
<polyline points="1535.8,573.6 1570.9,570.6 1579.7,591.1"/>
<polyline points="1600.2,617.5 1658.7,614.6 1717.3,608.7"/>
<polyline points="1679.2,886.8 1705.6,895.6 1693.8,907.3 1658.7,919.0"/>
<polyline points="1790.5,854.6 1793.4,892.7 1825.6,957.1"/>
<polyline points="1550.4,801.9 1576.7,825.4 1594.3,848.8"/>
<polyline points="1775.8,556.0 1819.7,594.1 1787.5,643.8 1799.2,708.2"/>
<polyline points="1714.3,626.3 1717.3,582.3"/>
<polyline points="2322.7,878.1 2252.5,878.1 2252.5,967.9"/>
<polyline points="2422.3,804.9 2527.7,804.9"/>
<polyline points="2527.7,755.1 2524.7,819.5 2518.9,967.9"/>
<polyline points="2527.7,755.1 2571.0,746.3"/>
<polyline points="1866.0,702.4 1909.9,708.2 1953.8,720.0 1983.1,743.4 1986.0,784.4 1959.7,796.1 1939.2,813.6 1936.3,848.8"/>
<polyline points="2384.2,696.5 2387.1,737.5 2422.3,755.1 2431.1,778.5 2422.3,807.8 2428.1,854.6 2407.6,857.6 2334.4,831.2"/>
<polyline points="2205.6,725.8 2208.5,749.2 2173.4,758.0 2135.4,778.5"/>
<polyline points="2041.7,585.3 2053.4,579.4 2088.5,573.6"/>
<polyline points="2328.6,573.6 2407.6,570.6 2451.5,556.0"/>
<polyline points="2696.9,556.0 2746.7,594.1 2781.9,605.8 2819.9,661.4 2863.9,696.6 2890.2,720.0"/>
<polyline points="2571.0,819.6 2603.2,799.1 2614.9,804.9 2699.9,761.0 2723.3,731.7 2740.9,731.7 2758.4,758.1 2799.4,766.9 2814.1,766.9 2790.7,796.2 2789.2,819.6 2828.7,898.7"/>
<polyline points="2995.7,886.9 3030.8,851.8 3068.9,866.4 3133.3,875.2 3153.8,816.7"/>
<polyline points="3262.2,714.2 3278.0,714.2"/>
<polyline points="3262.2,714.2 3259.3,866.4 3278.0,866.4"/>
<polyline points="2922.4,968.1 2951.7,933.8 3039.6,930.9 3054.2,968.1"/>
<polyline points="3244.6,919.2 3268.0,878.2 3278.0,848.9"/>
<polyline points="737.1,968.0 737.1,1011.9 751.7,1026.6 740.0,1055.8 737.1,1114.4 742.9,1158.3"/>
<polyline points="737.1,985.6 822.0,985.6 889.3,994.3 903.9,1011.9 924.4,994.3 968.4,997.3 985.9,1038.3"/>
<polyline points="751.7,1213.9 778.1,1266.6 822.0,1257.8 842.5,1266.6 871.7,1257.8 895.2,1252.0 927.4,1219.8 977.1,1219.8 1038.6,1196.4 1041.5,1143.7"/>
<polyline points="860.0,1260.8 863.0,1307.6 886.4,1348.6 892.2,1363.2"/>
<polyline points="543.8,968.0 555.5,985.6 532.1,1032.4 508.7,1023.6"/>
<polyline points="1050.3,1120.2 1091.3,1126.1 1123.5,1164.2 1117.7,1178.8 1085.5,1178.8"/>
<polyline points="731.2,1260.8 734.1,1379.9"/>
<polyline points="1056.2,1202.2 1065.0,1231.5 1114.7,1290.1 1129.4,1379.9"/>
<polyline points="1085.5,1085.1 1138.2,1020.7 1161.0,1026.6"/>
<polyline points="1161.0,985.6 1199.1,979.7 1207.8,1020.7 1248.8,1079.3 1289.8,1076.3 1301.5,1105.6 1351.3,1117.3 1377.7,1111.5 1389.4,1061.7 1424.5,1073.4 1436.2,1067.5"/>
<polyline points="1319.1,968.0 1325.0,991.4 1365.9,1014.8 1389.4,1055.8"/>
<polyline points="1161.0,1266.6 1248.8,1260.8 1254.7,1278.3 1278.1,1260.8 1284.0,1231.5"/>
<polyline points="1336.7,1120.2 1342.5,1202.2 1383.5,1231.5 1409.9,1290.1 1406.9,1348.6"/>
<polyline points="1506.5,1149.5 1527.0,1108.5 1565.0,1091.0 1606.0,1114.4 1658.7,1093.9 1688.0,1055.8"/>
<polyline points="1588.5,1152.4 1614.8,1170.0 1594.3,1211.0 1576.7,1231.5 1600.2,1260.8"/>
<polyline points="1606.0,1290.1 1629.4,1269.6 1717.3,1313.5 1775.8,1319.3 1805.1,1290.1"/>
<polyline points="1746.5,1050.0 1790.5,1020.7 1819.7,1044.1 1866.0,1026.6"/>
<polyline points="1647.0,1050.0 1688.0,1070.5 1717.3,1064.6 1746.5,1055.8"/>
<polyline points="2188.1,1167.1 2232.0,1167.1 2252.5,1181.7 2281.7,1161.2 2311.0,1155.4"/>
<polyline points="2325.7,1011.9 2393.0,1017.8 2422.3,1026.6 2469.1,1050.0 2480.8,1006.1 2516.0,1006.1"/>
<polyline points="2393.0,1143.7 2451.5,1137.8"/>
<polyline points="2188.1,1167.1 2188.1,1202.2 2167.6,1222.7"/>
<polyline points="1866.0,1035.3 1904.1,1035.3 1912.8,1055.8 1924.6,1067.5"/>
<polyline points="1912.8,1102.7 1924.6,1132.0 1889.4,1149.5 1866.0,1172.9"/>
<polyline points="2041.7,1284.2 2047.5,1304.7 2094.4,1307.6 2123.6,1316.4"/>
<polyline points="2047.5,1213.9 2065.1,1219.8 2056.3,1260.8"/>
<polyline points="2469.1,1050.0 2480.8,1114.4 2504.2,1143.7"/>
<polyline points="2571.0,968.0 2576.9,991.4 2571.0,1026.6"/>
<polyline points="2571.0,1026.6 2600.3,1064.6 2629.6,1073.4 2653.0,1044.1 2667.6,1055.9 2694.0,1050.0"/>
<polyline points="2702.8,1061.7 2705.7,1091.0 2708.7,1114.4 2735.0,1117.4 2776.0,1105.7 2787.7,1120.3 2819.9,1132.0 2863.9,1126.2 2878.5,1102.7 2899.0,1070.5 2922.4,1061.7 2937.1,1055.9"/>
<polyline points="2776.0,973.9 2764.3,1011.9 2781.9,1050.0 2773.1,1105.7"/>
<polyline points="2863.9,1126.2 2858.0,1173.0 2822.9,1199.4 2843.4,1222.8 2860.9,1202.3 2858.0,1260.9"/>
<polyline points="2981.0,1152.5 3039.6,1155.4 3039.6,1184.7 3074.7,1167.2"/>
<polyline points="2981.0,1152.5 2954.7,1202.3 2960.5,1231.6 2940.0,1260.9 2957.6,1290.2 2934.2,1334.1"/>
<polyline points="3098.2,982.6 3074.7,1026.6 3063.0,1055.9 3027.9,1073.4 3010.3,1079.3"/>
<polyline points="3098.2,1079.3 3086.5,1143.7 3080.6,1202.3"/>
<polyline points="3133.3,1255.0 3156.7,1290.2 3162.6,1319.4 3127.5,1354.6 3095.2,1348.7"/>
<polyline points="3278.0,1260.9 3186.0,1260.9 3156.7,1290.2"/>
<polyline points="3186.0,1064.6 3230.0,1079.3 3244.6,1108.6"/>
<polyline points="474.5,282.6 525.3,264.1 576.1,250.2 603.8,236.4 654.6,199.4 663.9,171.7 705.4,153.2 728.5,144.0"/>
<polyline points="723.9,144.0 733.1,190.2 723.9,199.4 728.5,213.3 779.3,245.6 830.1,254.9 839.4,273.3 853.2,245.6 862.5,204.0 904.0,190.2 936.4,176.3 936.4,153.2 917.9,144.0"/>
<polyline points="1024.1,398.0 1079.6,421.1 1116.5,421.1 1158.1,416.5 1176.6,425.8 1204.3,421.1 1222.7,439.6 1259.7,453.5 1287.4,448.8 1315.1,467.3"/>
<polyline points="756.2,582.8 788.6,587.4 797.8,605.9 793.2,652.1 788.6,689.0 797.8,716.7 797.8,744.5"/>
<polyline points="797.8,744.5 825.5,735.2 848.6,749.1 871.7,726.0 890.2,730.6 890.2,758.3 917.9,793.9"/>
<polyline points="710.0,772.2 733.1,758.3 770.1,762.9 797.8,744.5"/>
<polyline points="825.5,458.1 825.5,541.2 779.3,582.8 756.2,582.8"/>
<polyline points="1208.9,199.4 1199.6,273.3 1218.1,301.0 1241.2,305.7"/>
<polyline points="1334.1,605.9 1315.1,550.5 1334.1,536.6"/>
<polyline points="1111.9,421.1 1148.8,467.3 1195.0,490.4 1241.2,481.2 1333.6,513.5"/>
<polyline points="1334.0,992.6 1389.4,1011.1 1426.4,1052.7 1472.6,1043.4"/>
<polyline points="1472.6,1043.4 1518.8,997.2 1551.1,978.8 1620.4,1001.9"/>
<polyline points="1620.4,1001.9 1648.1,969.5 1685.0,955.7 1722.0,932.6"/>
<polyline points="1749.7,1043.4 1777.4,1020.3 1795.9,1034.2 1842.1,1029.6 1888.3,1043.4 1916.0,1071.1 1925.2,1126.6 1888.3,1158.9"/>
<polyline points="1334.0,1112.7 1389.4,1126.6 1426.4,1145.0"/>
<polyline points="1509.5,1126.6 1518.8,1163.5 1541.9,1186.6 1564.9,1209.7 1611.1,1228.2"/>
<polyline points="1611.1,1228.2 1629.6,1279.0 1657.3,1348.3 1694.3,1417.6"/>
<polyline points="1795.9,1237.4 1842.1,1251.3 1888.3,1269.8 1948.3,1302.1 1980.7,1325.2"/>
<polyline points="2040.7,1228.2 2045.3,1292.8 2063.8,1315.9 2119.2,1311.3"/>
<polyline points="2188.5,1209.7 2165.4,1255.9 2119.2,1292.8"/>
<polyline points="737.8,983.9 825.5,983.9 890.2,993.2 917.9,997.8 964.1,997.8 982.6,1025.5 1010.3,1007.0"/>
<polyline points="737.8,983.9 733.1,1011.7 751.6,1030.1 742.4,1108.7 742.4,1154.8 756.2,1191.8 751.6,1219.5 774.7,1261.1 834.8,1265.7 894.8,1251.8 927.1,1219.5 977.9,1219.5 1038.0,1196.4 1042.6,1145.6"/>
<polyline points="1010.3,1007.0 1051.8,988.6 1102.7,1016.3 1148.8,988.6 1176.6,970.1 1241.2,983.9"/>
<polyline points="1051.8,1117.9 1093.4,1127.1 1121.1,1164.1 1084.2,1177.9"/>
<polyline points="1056.5,1196.4 1065.7,1228.8 1125.7,1265.7 1139.6,1311.9 1125.7,1376.6"/>
<polyline points="857.8,1265.7 862.5,1307.3 894.8,1362.7"/>
<polyline points="1162.7,1265.7 1250.5,1261.1 1278.2,1274.9"/>
<polyline points="1204.3,1057.9 1241.2,1080.9 1287.4,1076.3 1333.6,1099.4"/>
<polyline points="525.3,850.0 529.9,905.4 576.1,942.4 548.4,988.6 529.9,1030.1"/>
</g><g stroke="#9696ad" stroke-width="2.2">
<polyline points="1509.4,394.3 1717.3,400.2 1737.8,392.9 1767.0,391.4 1866.0,394.3"/>
<polyline points="1509.4,394.3 1500.6,422.1 1491.8,460.2 1506.5,495.3 1521.1,504.1 1506.5,518.8 1524.0,536.3 1518.2,555.9"/>
<polyline points="1866.0,394.3 1898.2,394.3 1909.9,401.6 1921.6,398.7 1948.0,378.2 1974.3,366.5 2000.7,369.4 2030.0,375.3 2117.8,392.9 2120.7,407.5 2144.1,395.8 2192.4,394.3 2202.7,378.2 2226.1,387.0 2217.3,369.4 2234.9,346.0 2264.2,334.3 2275.9,316.7 2290.5,305.0 2311.0,308.0 2322.7,319.7 2363.7,312.3 2395.9,315.3 2445.7,269.9 2460.3,220.1 2475.0,212.8 2457.4,164.5 2486.7,155.7 2521.8,146.9 2533.5,144.0"/>
<polyline points="2192.4,394.3 2173.4,442.6 2167.6,507.0 2232.0,555.9"/>
<polyline points="2401.8,144.0 2463.3,226.0"/>
<polyline points="2571.0,155.7 2594.4,179.1 2620.8,208.4 2629.6,228.9 2653.0,231.9 2673.5,255.3 2688.1,267.0"/>
<polyline points="2691.1,144.0 2688.1,187.9 2691.1,220.1 2688.1,255.3 2670.6,296.3 2661.8,337.3 2699.9,369.5 2711.6,407.6 2708.7,428.1 2723.3,451.5 2726.2,466.2 2714.5,501.3 2688.1,504.2 2682.3,527.7 2696.9,556.1"/>
<polyline points="576.0,799.0 608.2,807.8 620.0,837.1 631.7,857.6"/>
<polyline points="631.7,857.6 602.4,857.6 581.9,854.6 543.8,854.6 526.3,860.5 526.3,907.3 564.3,913.2 567.3,936.6 579.0,945.4 561.4,942.5 549.7,967.9"/>
<polyline points="456.0,673.1 456.0,679.0"/>
<polyline points="1161.0,626.3 1172.7,638.0 1204.9,626.3 1219.6,643.8 1243.0,649.7 1248.8,626.3 1278.1,611.6 1298.6,608.7 1316.2,597.0 1365.9,591.1 1418.6,597.0 1430.4,608.7 1445.0,594.1 1453.8,611.6 1471.3,626.3 1486.0,638.0 1500.6,661.4 1524.0,687.7 1535.8,676.0"/>
<polyline points="1518.2,556.0 1527.0,602.8 1518.2,626.3 1524.0,652.6 1535.8,673.1 1538.7,696.5 1529.9,708.2 1541.6,717.0 1524.0,740.4 1521.1,758.0 1541.6,763.9 1550.4,801.9 1570.9,910.3 1553.3,954.2 1518.2,967.9"/>
<polyline points="2091.4,556.0 2094.4,591.1 2085.6,626.3 2094.4,655.5 2070.9,658.5 2068.0,684.8 2103.1,673.1 2126.6,702.4 2117.8,720.0 2109.0,755.1 2120.7,784.4 2114.9,799.0 2094.4,807.8 2097.3,819.5 2123.6,845.8 2138.3,860.5 2150.0,878.1 2158.8,892.7 2144.1,907.3 2129.5,930.8 2135.4,967.9"/>
<polyline points="2270.0,573.6 2273.0,614.6 2270.0,673.1 2287.6,708.2 2316.9,737.5 2322.7,766.8 2321.3,837.1 2325.7,878.1 2322.7,967.9"/>
<polyline points="2694.0,556.0 2682.3,573.6 2673.5,599.9 2635.4,617.5 2632.5,638.0 2620.8,643.9 2600.3,679.0 2600.3,708.3 2591.5,734.7 2571.0,749.3"/>
<polyline points="456.0,1003.1 467.7,1006.1 473.6,1020.7 497.0,1052.9 502.8,1079.3 517.5,1099.7 511.6,1158.3 497.0,1190.5 473.6,1216.9 458.9,1225.6 491.1,1228.6 497.0,1249.1 538.0,1260.8 584.8,1260.8 602.4,1284.2 596.5,1295.9 611.2,1319.3 631.7,1334.0 649.2,1345.7 672.7,1348.6 678.5,1379.9"/>
<polyline points="1518.2,968.0 1500.6,1003.1 1488.9,1050.0 1483.1,1085.1 1462.6,1126.1 1445.0,1152.4 1439.1,1178.8 1433.3,1202.2 1442.1,1243.2 1453.8,1272.5 1465.5,1301.8 1471.3,1328.1 1477.2,1342.8 1483.1,1379.9"/>
<polyline points="2135.4,968.0 2141.2,994.3 2123.6,1014.8 2120.7,1047.0 2144.1,1061.7 2141.2,1108.5 2135.4,1132.0 2123.6,1143.7 2126.6,1172.9 2141.2,1190.5 2147.1,1208.1 2158.8,1211.0 2158.8,1237.4 2188.1,1252.0 2208.5,1257.8 2217.3,1278.3 2229.0,1284.2 2240.8,1287.1"/>
<polyline points="2322.7,968.0 2325.7,1041.2 2311.0,1134.9 2316.9,1178.8 2337.4,1213.9 2346.1,1237.4 2352.0,1260.8 2322.7,1269.6"/>
<polyline points="2513.0,968.0 2524.7,997.3 2521.8,1055.8 2530.6,1114.4 2521.8,1172.9 2518.9,1249.1"/>
<polyline points="456.0,384.2 479.1,381.9 511.4,384.2 516.0,421.1 511.4,439.6 520.7,495.0 553.0,513.5 576.1,532.0 580.7,550.5 608.4,513.5 622.3,495.0 663.9,490.4 682.3,513.5 686.9,527.4 714.7,532.0 742.4,548.2 756.2,541.2 756.2,518.1 770.1,513.5 811.7,508.9 816.3,490.4 811.7,467.3 825.5,458.1 853.2,448.8 890.2,444.2 899.4,467.3 899.4,513.5 908.7,536.6 931.8,541.2 945.6,527.4 964.1,504.3 996.4,499.7 1019.5,495.0 1028.7,508.9 1056.5,522.8 1098.0,527.4 1107.3,550.5 1121.1,578.2 1125.7,601.3 1153.5,624.4 1176.6,633.6"/>
<polyline points="1042.6,241.0 1065.7,250.2 1070.3,282.6 1079.6,310.3 1070.3,342.6 1056.5,365.7 1024.1,384.2 1028.7,421.1 1033.4,476.6 1019.5,499.7"/>
<polyline points="1042.6,241.0 1074.9,222.5 1121.1,208.7 1167.3,204.0 1181.2,190.2 1208.9,171.7 1222.7,148.6"/>
<polyline points="543.8,573.6 539.1,605.9 548.4,642.8 543.8,675.2 566.9,698.3 589.9,702.9 585.3,730.6 617.7,749.1 580.7,762.9 576.1,793.9"/>
<polyline points="2526.2,794.0 2530.8,854.1 2521.5,932.6 2516.9,969.6"/>
<polyline points="678.5,1380.0 684.3,1426.0 668.0,1480.4 646.2,1567.4 651.7,1610.9"/>
<polyline points="1483.0,1380.0 1521.0,1404.0 1521.0,1480.0"/>
</g><g stroke="#f0c86c" stroke-width="2.0">
<polyline points="1161.0,379.7 1240.0,366.5 1348.4,354.8 1383.5,303.6 1424.5,293.3 1491.8,258.2 1532.8,245.0 1579.7,220.1 1620.7,196.7 1658.7,173.3 1705.6,164.5 1772.9,161.6 1857.8,146.9"/>
<polyline points="1770.0,164.5 1787.5,208.4"/>
<polyline points="1793.4,227.4 1805.1,275.7 1822.7,366.5 1831.5,419.2 1866.0,425.1"/>
<polyline points="1506.5,460.2 1579.7,451.4 1620.7,433.8 1658.7,419.2 1696.8,422.1 1717.3,417.7 1746.5,432.4 1811.0,425.1"/>
<polyline points="1500.6,466.1 1527.0,510.0 1559.2,533.4"/>
<polyline points="1576.7,454.3 1568.0,477.8 1576.7,507.0 1576.7,533.4"/>
<polyline points="1524.0,398.7 1521.1,425.1 1506.5,457.3"/>
<polyline points="1866.0,155.7 1909.9,163.0 1959.7,176.2 2006.5,179.1 2090.6,198.7 2129.5,205.5 2164.6,199.6 2191.0,182.1 2205.6,144.0"/>
<polyline points="1959.7,176.2 1956.8,249.4 1959.7,319.7 1971.4,348.9 2000.7,363.6 2030.0,375.3 2050.4,389.9 2062.7,420.7 2068.0,466.1 2100.2,510.0 2114.9,524.6 2144.1,536.3 2188.1,555.9"/>
<polyline points="2090.6,198.7 2103.1,231.8 2117.8,267.0 2129.5,319.7 2135.4,334.3"/>
<polyline points="2179.3,360.7 2196.8,387.0 2211.5,398.7 2232.0,430.9 2256.9,462.5 2275.9,495.3 2284.7,545.1"/>
<polyline points="1866.0,433.8 1924.6,413.4 1953.8,395.8 1997.7,381.1 2030.0,378.2"/>
<polyline points="1989.0,369.4 1991.9,436.8 1994.8,495.3 2006.5,524.6 2012.4,555.9"/>
<polyline points="1866.0,466.1 1880.6,524.6 1886.5,555.9"/>
<polyline points="2825.8,161.6 2819.9,176.2 2822.9,217.2 2843.4,267.0 2846.3,308.0 2866.8,343.2 2878.5,366.6 2893.2,387.1 2890.2,425.2 2901.9,448.6"/>
<polyline points="2934.2,474.9 2975.2,495.4 3020.6,507.2 3054.2,524.7 3092.3,539.4 3112.8,556.1"/>
<polyline points="3020.6,507.2 3007.4,524.7 3010.3,556.1"/>
<polyline points="3165.5,556.1 3186.0,495.4 3206.5,466.2 3232.9,448.6 3259.3,445.7 3278.0,454.4"/>
<polyline points="3174.3,144.0 3200.7,155.7 3238.8,179.1 3268.0,185.0 3278.0,196.7"/>
<polyline points="1021.1,556.0 1053.3,567.7 1085.5,585.3 1085.5,614.6 1073.8,661.4 1073.8,696.5 1085.5,720.0 1085.5,743.4"/>
<polyline points="1079.6,772.7 1059.1,801.9 1062.0,825.4 1079.6,860.5 1097.2,907.3 1106.0,967.9"/>
<polyline points="1079.6,564.8 1100.1,556.0"/>
<polyline points="1576.7,585.3 1573.8,632.1 1585.5,658.5 1579.7,687.7 1585.5,714.1 1573.8,731.7 1570.9,758.0 1600.2,790.2 1608.9,825.4 1635.3,866.3 1641.1,898.5 1655.8,922.0 1649.9,967.9"/>
<polyline points="1585.5,714.1 1614.8,722.9 1658.7,722.9 1685.1,725.8 1693.8,746.3 1711.4,749.2 1746.5,737.5"/>
<polyline points="1784.6,740.4 1799.2,740.4"/>
<polyline points="1849.0,708.2 1866.0,696.5"/>
<polyline points="1790.5,743.4 1761.2,799.0 1737.8,845.8 1740.7,878.1 1717.3,936.6 1708.5,967.9"/>
<polyline points="1866.0,690.7 1918.7,693.6 1953.8,684.8 2025.0,682.8 2024.1,731.7 2021.2,760.9 2036.7,790.5 2041.7,813.6 2065.1,834.1 2088.5,869.3 2120.7,904.4 2123.6,922.0"/>
<polyline points="2123.6,946.9 2123.6,967.9"/>
<polyline points="1986.9,594.9 2009.5,623.3 2024.1,667.3"/>
<polyline points="2185.1,556.0 2217.3,585.3 2226.1,617.5 2244.6,662.9 2252.5,699.5 2237.8,731.7 2223.2,784.4 2202.7,848.8 2208.5,883.9 2234.9,927.8 2243.7,967.9"/>
<polyline points="2305.2,573.6 2305.2,591.1 2322.7,632.1 2322.7,673.1 2311.0,702.4 2313.9,731.7"/>
<polyline points="2325.7,831.2 2349.1,863.4 2378.4,901.5 2386.6,960.6"/>
<polyline points="1866.0,556.0 1874.8,585.3 1866.0,614.6"/>
<polyline points="3136.2,564.8 3068.9,594.1 3045.5,614.6 3010.3,635.1 2975.2,690.7 2963.5,702.4 2922.4,720.0 2901.9,737.6 2899.0,772.7 2875.6,804.9 2863.9,828.4 2854.5,856.8 2837.5,878.2 2828.7,889.9"/>
<polyline points="2828.7,889.9 2805.3,907.4 2798.9,925.0 2776.0,945.5"/>
<polyline points="3010.3,556.0 3007.4,585.3 3010.3,635.1"/>
<polyline points="2614.9,664.4 2654.5,674.6"/>
<polyline points="2693.4,674.6 2717.4,661.4 2735.0,649.7 2743.8,652.6 2726.2,693.7 2726.2,746.4 2746.7,775.7 2770.2,804.9 2793.6,819.6 2822.9,828.4 2854.5,856.8"/>
<polyline points="2969.3,702.4 2995.7,722.9 3010.3,731.7 3033.7,740.5 3045.5,725.9 3068.9,728.8 3086.5,737.6 3120.7,748.7 3156.7,758.1 3174.3,761.0 3225.6,755.2"/>
<polyline points="2854.5,856.8 2878.5,875.2 2901.9,901.6 2931.2,910.4 2957.6,925.0 2986.9,936.7 3016.2,919.2 3051.3,895.7 3086.5,898.7 3115.7,951.4"/>
<polyline points="3259.3,968.1 3278.0,895.7"/>
<polyline points="2896.1,775.7 2907.8,796.2 2922.4,799.1 2907.8,831.3 2881.4,845.9"/>
<polyline points="688.8,1178.8 763.4,1178.8 850.7,1154.8 895.2,1149.5 971.3,1137.8 1012.3,1145.1 1050.3,1162.7 1066.4,1167.1"/>
<polyline points="1066.4,1167.1 1065.0,1132.0 1073.8,1108.5 1106.0,1055.8 1111.8,991.4 1108.9,968.0"/>
<polyline points="688.8,1178.8 687.3,1199.3 660.9,1215.4 609.1,1213.9"/>
<polyline points="546.2,1202.2 485.3,1208.1 473.6,1231.5 456.0,1234.4"/>
<polyline points="456.0,1228.6 467.7,1237.4 470.6,1260.8 499.9,1275.4 544.7,1302.6 535.0,1325.2 543.8,1348.6 549.7,1379.9"/>
<polyline points="456.0,979.7 494.1,991.4 514.6,1011.9 505.8,1020.7"/>
<polyline points="1647.0,968.0 1641.1,1014.8 1629.4,1035.3 1629.4,1055.8 1608.9,1070.5 1594.3,1085.1 1588.5,1108.5 1600.2,1117.3 1594.3,1143.7 1568.0,1167.1 1582.6,1190.5 1568.0,1231.5 1512.3,1252.0 1497.7,1263.7 1477.2,1290.1 1483.1,1319.3 1506.5,1354.5 1524.0,1379.9"/>
<polyline points="1671.9,1025.1 1664.6,1050.0 1676.3,1064.6 1702.6,1096.8 1714.3,1123.2 1729.0,1172.9 1733.4,1184.1 1723.1,1225.6 1740.7,1231.5 1749.5,1275.4 1772.9,1310.5 1782.6,1338.9 1790.5,1379.9"/>
<polyline points="1733.4,1184.1 1775.8,1193.4 1819.7,1208.1 1866.0,1205.1"/>
<polyline points="2123.6,968.0 2117.8,1026.6 2109.0,1055.8 2111.9,1085.1 2106.1,1132.0 2109.0,1143.7 2100.2,1167.1 2076.8,1202.2 2059.2,1246.1 2041.7,1290.1 2035.8,1334.0 2024.1,1366.2"/>
<polyline points="2243.7,968.0 2234.9,1026.6 2237.8,1114.4 2237.8,1172.9 2240.8,1231.5 2246.6,1290.9"/>
<polyline points="2404.7,968.0 2428.1,997.3 2422.3,1026.6 2401.8,1041.2 2402.4,1098.9 2436.9,1143.7 2416.4,1190.5 2451.5,1219.8 2475.0,1222.7"/>
<polyline points="2024.1,1372.0 2070.9,1342.8 2123.6,1328.1 2158.8,1301.8 2182.2,1301.8 2217.3,1293.0 2246.6,1287.1 2290.5,1272.5 2363.7,1246.1 2422.3,1246.1 2510.1,1237.4 2571.0,1225.6"/>
<polyline points="1866.0,1205.1 1895.3,1216.9 1924.6,1243.2 1942.1,1272.5 1939.2,1290.1 1953.8,1319.3 1978.7,1328.1"/>
<polyline points="2571.0,1193.5 2623.7,1187.7 2641.3,1190.6"/>
<polyline points="2571.0,1225.7 2623.7,1228.7 2638.4,1231.6"/>
<polyline points="2734.4,1063.2 2776.0,1064.6 2805.3,1050.0 2840.4,1035.4 2854.5,1026.6 2878.5,1022.2 2907.8,1020.7 2922.4,1044.1 2937.1,1055.9 2970.8,1085.1 3010.3,1082.2 3045.5,1093.9 3068.9,1132.0 3077.7,1158.4 3074.7,1202.3 3048.4,1219.9 3051.3,1255.0"/>
<polyline points="2943.0,1174.5 2966.4,1178.9 3010.3,1202.3 3048.4,1222.8 3068.9,1246.2 3127.5,1263.8 3186.0,1260.9 3244.6,1278.4 3278.0,1290.2"/>
<polyline points="2814.7,1181.8 2856.6,1181.8"/>
<polyline points="2705.7,1158.4 2729.2,1167.2"/>
<polyline points="2606.1,1173.0 2614.9,1132.0 2629.6,1105.7 2667.6,1096.9 2696.9,1088.1 2734.4,1063.2"/>
<polyline points="3156.7,1023.6 3189.0,1064.6 3174.3,1108.6 3168.5,1143.7 3162.6,1175.9 3127.5,1178.9 3098.2,1214.0 3068.9,1231.6"/>
<polyline points="3156.7,1023.6 3191.9,1003.1 3221.2,979.7 3252.8,985.0"/>
<polyline points="3048.4,1257.9 3054.2,1304.8 3068.9,1348.7 3071.8,1380.1"/>
<polyline points="2854.5,989.1 2849.2,1009.0 2854.5,1026.6"/>
<polyline points="3252.8,985.0 3278.0,991.4"/>
<polyline points="585.3,194.8 594.6,217.9 631.5,264.1 645.4,277.9 654.6,305.7 663.9,319.5 682.3,326.4 714.7,319.5 760.8,317.2"/>
<polyline points="811.7,312.6 848.6,312.6 894.8,324.1 954.8,333.4 991.8,338.0 1024.1,347.2 1051.8,374.9 1074.9,384.2 1102.7,388.8 1130.4,398.0 1148.8,388.8 1176.6,374.9 1241.2,365.7 1334.1,361.1"/>
<polyline points="991.8,338.0 977.9,310.3 968.7,277.9 973.3,236.4 991.8,194.8 1019.5,162.5 1031.1,144.0"/>
<polyline points="996.4,342.6 1005.7,393.4 1005.7,409.6"/>
<polyline points="1005.7,435.0 1005.7,448.8 996.4,495.0 1001.0,513.5"/>
<polyline points="1001.0,536.6 1033.4,559.7 1079.6,582.8 1088.8,605.9"/>
<polyline points="1241.2,365.7 1222.7,393.4 1195.0,416.5 1176.6,430.4 1160.4,460.4 1153.5,495.0 1130.4,527.4 1102.7,550.5 1079.6,564.3"/>
<polyline points="456.0,157.9 483.7,144.0"/>
<polyline points="1869.8,435.0 1872.1,467.3 1879.0,508.9"/>
<polyline points="1879.0,532.0 1872.1,605.9 1872.1,689.0"/>
<polyline points="480.0,1505.0 520.0,1480.0 560.0,1470.0"/>
<polyline points="560.0,1380.0 590.0,1450.0 610.0,1540.0 640.0,1570.0"/>
<polyline points="1297.0,1435.0 1400.0,1430.0 1450.0,1415.0 1520.0,1440.0 1600.0,1455.0 1700.0,1470.0 1780.0,1480.0"/>
<polyline points="1480.0,1500.0 1560.0,1510.0 1700.0,1500.0"/>
<polyline points="1830.0,1470.0 1900.0,1440.0 1990.0,1400.0 2040.0,1370.0 2120.0,1345.0"/>
<polyline points="1640.0,1420.0 1700.0,1430.0 1760.0,1460.0"/>
</g><g stroke="#f09a5a" stroke-width="2.4">
<polyline points="1066.4,1167.1 1085.5,1190.5 1111.8,1225.6 1123.5,1272.5 1129.4,1304.7 1161.0,1322.3"/>
<polyline points="1161.0,1322.3 1175.6,1336.9 1190.3,1348.6 1213.7,1379.9"/>
<polyline points="2737.9,976.8 2739.4,1026.6 2733.5,1063.2 2720.4,1093.9 2702.8,1117.4 2688.1,1143.7 2655.9,1164.2 2641.3,1190.6 2638.4,1231.6"/>
<polyline points="1070.0,1170.7 1113.6,1225.0 1130.0,1284.8 1173.5,1339.0 1217.0,1382.6 1255.0,1415.0 1298.4,1431.5"/>
</g></g>
<path fill="#75cdf0" d="M456,1537 L510,1562 L565,1584 L619,1613 L673,1605 L728,1578 L782,1554 L836,1529 L891,1513 L945,1494 L999,1483 L1054,1475 L1108,1470 L1163,1465 L1217,1461 L1271,1460 L1326,1461 L1380,1465 L1434,1475 L1489,1486 L1543,1502 L1597,1524 L1646,1543 L1706,1518 L1760,1491 L1815,1475 L1856,1461 L1911,1437 L1966,1415 L2022,1376 L2077,1360 L2115,1357 L2187,1343 L2209,1310 L2242,1290 L2298,1271 L2353,1263 L2408,1256 L2463,1249 L2518,1245 L2574,1241 L2629,1238 L2684,1237 L2739,1238 L2794,1245 L2850,1263 L2877,1277 L2898,1300 L2929,1328 L2950,1352 L2968,1387 L2992,1425 L2999,1446 L3009,1481 L3027,1523 L3048,1561 L3079,1596 L3114,1620 L3149,1629 L3201,1624 L3278,1615 L3278,1790 L456,1790 Z"/>
<g fill="#111" stroke="#f4f2e8" stroke-width="1.5">
<circle cx="663.0" cy="316.7" r="3.3"/>
<circle cx="488.8" cy="352.7" r="3.3"/>
<circle cx="992.7" cy="336.6" r="3.3"/>
<circle cx="1130.8" cy="398.7" r="3.3"/>
<circle cx="858.6" cy="490.9" r="3.3"/>
<circle cx="1130.8" cy="526.1" r="3.3"/>
<circle cx="1158.7" cy="460.2" r="3.3"/>
<circle cx="1438.5" cy="185.0" r="3.3"/>
<circle cx="1236.5" cy="228.9" r="3.3"/>
<circle cx="1492.7" cy="256.7" r="3.3"/>
<circle cx="1385.0" cy="303.0" r="3.3"/>
<circle cx="1244.4" cy="362.1" r="3.3"/>
<circle cx="1468.4" cy="368.9" r="3.3"/>
<circle cx="1570.9" cy="386.4" r="3.3"/>
<circle cx="1642.6" cy="376.8" r="3.3"/>
<circle cx="1818.3" cy="365.0" r="3.3"/>
<circle cx="1830.6" cy="270.8" r="3.3"/>
<circle cx="1498.6" cy="460.2" r="3.3"/>
<circle cx="1446.5" cy="518.8" r="3.3"/>
<circle cx="1576.7" cy="150.4" r="3.3"/>
<circle cx="2090.6" cy="198.7" r="3.3"/>
<circle cx="1958.8" cy="248.5" r="3.3"/>
<circle cx="2036.7" cy="301.2" r="3.3"/>
<circle cx="2062.7" cy="420.7" r="3.3"/>
<circle cx="2042.5" cy="484.5" r="3.3"/>
<circle cx="2256.9" cy="462.5" r="3.3"/>
<circle cx="2276.8" cy="522.6" r="3.3"/>
<circle cx="2410.6" cy="427.1" r="3.3"/>
<circle cx="2558.4" cy="370.9" r="3.3"/>
<circle cx="1870.4" cy="434.7" r="3.3"/>
<circle cx="1909.9" cy="163.0" r="3.3"/>
<circle cx="2655.1" cy="231.0" r="3.3"/>
<circle cx="3238.8" cy="179.1" r="3.3"/>
<circle cx="2699.0" cy="409.1" r="3.3"/>
<circle cx="2642.8" cy="526.2" r="3.3"/>
<circle cx="3020.6" cy="507.2" r="3.3"/>
<circle cx="598.9" cy="580.9" r="3.3"/>
<circle cx="858.9" cy="600.8" r="3.3"/>
<circle cx="648.4" cy="671.1" r="3.3"/>
<circle cx="846.9" cy="668.7" r="3.3"/>
<circle cx="1000.6" cy="681.3" r="3.3"/>
<circle cx="626.7" cy="896.5" r="3.3"/>
<circle cx="810.3" cy="954.8" r="3.3"/>
<circle cx="1096.6" cy="922.6" r="3.3"/>
<circle cx="1330.8" cy="570.6" r="3.3"/>
<circle cx="1494.8" cy="602.8" r="3.3"/>
<circle cx="1481.0" cy="715.0" r="3.3"/>
<circle cx="1186.8" cy="736.9" r="3.3"/>
<circle cx="1516.7" cy="940.4" r="3.3"/>
<circle cx="1986.9" cy="594.9" r="3.3"/>
<circle cx="2520.9" cy="605.2" r="3.3"/>
<circle cx="2328.6" cy="633.0" r="3.3"/>
<circle cx="2244.6" cy="662.9" r="3.3"/>
<circle cx="2025.0" cy="682.8" r="3.3"/>
<circle cx="2504.2" cy="703.0" r="3.3"/>
<circle cx="2167.0" cy="716.4" r="3.3"/>
<circle cx="2328.6" cy="764.7" r="3.3"/>
<circle cx="2499.0" cy="784.7" r="3.3"/>
<circle cx="2036.7" cy="790.5" r="3.3"/>
<circle cx="2022.6" cy="862.8" r="3.3"/>
<circle cx="2386.6" cy="960.6" r="3.3"/>
<circle cx="1872.7" cy="688.6" r="3.3"/>
<circle cx="2610.5" cy="593.2" r="3.3"/>
<circle cx="3218.3" cy="651.2" r="3.3"/>
<circle cx="3120.7" cy="748.7" r="3.3"/>
<circle cx="3012.7" cy="790.9" r="3.3"/>
<circle cx="2854.5" cy="856.8" r="3.3"/>
<circle cx="2798.9" cy="925.0" r="3.3"/>
<circle cx="650.7" cy="1056.7" r="3.3"/>
<circle cx="850.7" cy="1154.8" r="3.3"/>
<circle cx="688.8" cy="1178.8" r="3.3"/>
<circle cx="544.7" cy="1302.6" r="3.3"/>
<circle cx="942.0" cy="1290.9" r="3.3"/>
<circle cx="1103.0" cy="1266.6" r="3.3"/>
<circle cx="824.9" cy="1355.0" r="3.3"/>
<circle cx="1050.3" cy="1347.1" r="3.3"/>
<circle cx="1671.9" cy="1025.1" r="3.3"/>
<circle cx="1600.7" cy="1071.1" r="3.3"/>
<circle cx="1304.5" cy="1120.8" r="3.3"/>
<circle cx="1388.5" cy="1183.2" r="3.3"/>
<circle cx="1718.7" cy="1276.3" r="3.3"/>
<circle cx="1259.1" cy="1329.0" r="3.3"/>
<circle cx="1782.6" cy="1338.9" r="3.3"/>
<circle cx="2498.4" cy="1067.0" r="3.3"/>
<circle cx="2402.4" cy="1098.9" r="3.3"/>
<circle cx="2510.1" cy="1134.9" r="3.3"/>
<circle cx="2338.8" cy="1196.9" r="3.3"/>
<circle cx="1978.7" cy="1296.8" r="3.3"/>
<circle cx="2854.5" cy="989.1" r="3.3"/>
<circle cx="2976.6" cy="1019.3" r="3.3"/>
<circle cx="2854.5" cy="1045.0" r="3.3"/>
<circle cx="2734.4" cy="1063.2" r="3.3"/>
<circle cx="2970.8" cy="1087.2" r="3.3"/>
<circle cx="3252.8" cy="985.0" r="3.3"/>
<circle cx="526.7" cy="1556.5" r="3.3"/>
<circle cx="622.8" cy="1610.9" r="3.3"/>
<circle cx="816.3" cy="1543.0" r="3.3"/>
<circle cx="1294.6" cy="1440.8" r="3.3"/>
<circle cx="1706.0" cy="1513.0" r="3.3"/>
<circle cx="593.0" cy="1462.5" r="3.3"/>
<circle cx="1442.4" cy="1412.5" r="3.3"/>
<circle cx="1636.4" cy="1419.0" r="3.3"/>
<circle cx="1889.0" cy="1404.7" r="3.3"/>
<circle cx="3073.2" cy="1402.5" r="3.3"/>
<circle cx="2664.7" cy="1202.0" r="3.3"/>
<circle cx="3048.4" cy="1254.6" r="3.3"/>
</g>
<circle cx="1066.4" cy="1167.1" r="6" fill="#fff" stroke="#222" stroke-width="2.2"/><circle cx="1066.4" cy="1167.1" r="2.6" fill="#222"/>
<circle cx="2504.2" cy="1224.8" r="6" fill="#fff" stroke="#222" stroke-width="2.2"/><circle cx="2504.2" cy="1224.8" r="2.6" fill="#222"/>
<circle cx="2246.6" cy="1290.9" r="6" fill="#fff" stroke="#222" stroke-width="2.2"/><circle cx="2246.6" cy="1290.9" r="2.6" fill="#222"/>
<circle cx="1988.0" cy="1397.0" r="6" fill="#fff" stroke="#222" stroke-width="2.2"/><circle cx="1988.0" cy="1397.0" r="2.6" fill="#222"/>
<g fill="#2f8a14" stroke="#eef3e2" stroke-width="1" paint-order="stroke"><path d="M1346.9,743.4 m-10,-2 a6,6 0 0 1 5,-7 a6,6 0 0 1 10,0 a6,6 0 0 1 5,7 a5,5 0 0 1 -4,6 l-12,0 a5,5 0 0 1 -4,-6 z"/><rect x="1345.4" y="746.4" width="3" height="10"/><rect x="1342.4" y="754.4" width="9" height="2.5"/></g>
<g fill="#2f8a14" stroke="#eef3e2" stroke-width="1" paint-order="stroke"><path d="M1698.2,658.5 m-10,-2 a6,6 0 0 1 5,-7 a6,6 0 0 1 10,0 a6,6 0 0 1 5,7 a5,5 0 0 1 -4,6 l-12,0 a5,5 0 0 1 -4,-6 z"/><rect x="1696.7" y="661.5" width="3" height="10"/><rect x="1693.7" y="669.5" width="9" height="2.5"/></g>
<g fill="#2f8a14" stroke="#eef3e2" stroke-width="1" paint-order="stroke"><path d="M1524.0,1208.1 m-10,-2 a6,6 0 0 1 5,-7 a6,6 0 0 1 10,0 a6,6 0 0 1 5,7 a5,5 0 0 1 -4,6 l-12,0 a5,5 0 0 1 -4,-6 z"/><rect x="1522.5" y="1211.1" width="3" height="10"/><rect x="1519.5" y="1219.1" width="9" height="2.5"/></g>
<g fill="#2f8a14" stroke="#eef3e2" stroke-width="1" paint-order="stroke"><path d="M1506.5,1322.3 m-10,-2 a6,6 0 0 1 5,-7 a6,6 0 0 1 10,0 a6,6 0 0 1 5,7 a5,5 0 0 1 -4,6 l-12,0 a5,5 0 0 1 -4,-6 z"/><rect x="1505.0" y="1325.3" width="3" height="10"/><rect x="1502.0" y="1333.3" width="9" height="2.5"/></g>
<g fill="#2f8a14" stroke="#eef3e2" stroke-width="1" paint-order="stroke"><path d="M1986.0,1052.9 m-10,-2 a6,6 0 0 1 5,-7 a6,6 0 0 1 10,0 a6,6 0 0 1 5,7 a5,5 0 0 1 -4,6 l-12,0 a5,5 0 0 1 -4,-6 z"/><rect x="1984.5" y="1055.9" width="3" height="10"/><rect x="1981.5" y="1063.9" width="9" height="2.5"/></g>
<g fill="#2f8a14" stroke="#eef3e2" stroke-width="1" paint-order="stroke"><path d="M730.5,1374.5 m-10,-2 a6,6 0 0 1 5,-7 a6,6 0 0 1 10,0 a6,6 0 0 1 5,7 a5,5 0 0 1 -4,6 l-12,0 a5,5 0 0 1 -4,-6 z"/><rect x="729.0" y="1377.5" width="3" height="10"/><rect x="726.0" y="1385.5" width="9" height="2.5"/></g>
<g font-family="Liberation Sans, sans-serif" stroke-linejoin="round">
<text x="617.0" y="306.5" font-size="23.0" font-weight="normal" fill="#f1efe3" stroke="#f1efe3" stroke-width="3.0" textLength="92.2" lengthAdjust="spacingAndGlyphs">Bougouni</text>
<text x="617.0" y="306.5" font-size="23.0" font-weight="normal" fill="#4a4a4a" stroke="#4a4a4a" stroke-width="0.50" textLength="92.2" lengthAdjust="spacingAndGlyphs">Bougouni</text>
<text x="457.5" y="342.5" font-size="20.9" font-weight="normal" fill="#f1efe3" stroke="#f1efe3" stroke-width="3.0" textLength="64.4" lengthAdjust="spacingAndGlyphs">Soloba</text>
<text x="457.5" y="342.5" font-size="20.9" font-weight="normal" fill="#4a4a4a" stroke="#4a4a4a" stroke-width="0.50" textLength="64.4" lengthAdjust="spacingAndGlyphs">Soloba</text>
<text x="948.7" y="322.6" font-size="25.1" font-weight="normal" fill="#f1efe3" stroke="#f1efe3" stroke-width="3.0" textLength="87.8" lengthAdjust="spacingAndGlyphs">Sikasso</text>
<text x="948.7" y="322.6" font-size="25.1" font-weight="normal" fill="#4a4a4a" stroke="#4a4a4a" stroke-width="0.50" textLength="87.8" lengthAdjust="spacingAndGlyphs">Sikasso</text>
<text x="1088.7" y="387.0" font-size="23.0" font-weight="normal" fill="#f1efe3" stroke="#f1efe3" stroke-width="3.0" textLength="85.5" lengthAdjust="spacingAndGlyphs">Orodara</text>
<text x="1088.7" y="387.0" font-size="23.0" font-weight="normal" fill="#4a4a4a" stroke="#4a4a4a" stroke-width="0.50" textLength="85.5" lengthAdjust="spacingAndGlyphs">Orodara</text>
<text x="817.6" y="480.7" font-size="23.0" font-weight="normal" fill="#f1efe3" stroke="#f1efe3" stroke-width="3.0" textLength="84.9" lengthAdjust="spacingAndGlyphs">Tengréla</text>
<text x="817.6" y="480.7" font-size="23.0" font-weight="normal" fill="#4a4a4a" stroke="#4a4a4a" stroke-width="0.50" textLength="84.9" lengthAdjust="spacingAndGlyphs">Tengréla</text>
<text x="456.0" y="413.9" font-size="20.9" font-weight="normal" fill="#f1efe3" stroke="#f1efe3" stroke-width="3.0" textLength="34.5" lengthAdjust="spacingAndGlyphs">dou</text>
<text x="456.0" y="413.9" font-size="20.9" font-weight="normal" fill="#4a4a4a" stroke="#4a4a4a" stroke-width="0.50" textLength="34.5" lengthAdjust="spacingAndGlyphs">dou</text>
<text x="1077.3" y="518.8" font-size="23.0" font-weight="normal" fill="#f1efe3" stroke="#f1efe3" stroke-width="3.0" textLength="108.9" lengthAdjust="spacingAndGlyphs">Niangoloko</text>
<text x="1077.3" y="518.8" font-size="23.0" font-weight="normal" fill="#4a4a4a" stroke="#4a4a4a" stroke-width="0.50" textLength="108.9" lengthAdjust="spacingAndGlyphs">Niangoloko</text>
<text x="1119.1" y="449.9" font-size="25.1" font-weight="normal" fill="#f1efe3" stroke="#f1efe3" stroke-width="3.0" textLength="86.4" lengthAdjust="spacingAndGlyphs">Banfora</text>
<text x="1119.1" y="449.9" font-size="25.1" font-weight="normal" fill="#4a4a4a" stroke="#4a4a4a" stroke-width="0.50" textLength="86.4" lengthAdjust="spacingAndGlyphs">Banfora</text>
<text x="1405.5" y="174.2" font-size="22.2" font-weight="normal" fill="#f1efe3" stroke="#f1efe3" stroke-width="3.0" textLength="65.9" lengthAdjust="spacingAndGlyphs">Safané</text>
<text x="1405.5" y="174.2" font-size="22.2" font-weight="normal" fill="#4a4a4a" stroke="#4a4a4a" stroke-width="0.50" textLength="65.9" lengthAdjust="spacingAndGlyphs">Safané</text>
<text x="1207.0" y="218.7" font-size="23.0" font-weight="normal" fill="#f1efe3" stroke="#f1efe3" stroke-width="3.0" textLength="59.4" lengthAdjust="spacingAndGlyphs">Kouka</text>
<text x="1207.0" y="218.7" font-size="23.0" font-weight="normal" fill="#4a4a4a" stroke="#4a4a4a" stroke-width="0.50" textLength="59.4" lengthAdjust="spacingAndGlyphs">Kouka</text>
<text x="1450.8" y="245.0" font-size="25.1" font-weight="normal" fill="#f1efe3" stroke="#f1efe3" stroke-width="3.0" textLength="84.3" lengthAdjust="spacingAndGlyphs">Boromo</text>
<text x="1450.8" y="245.0" font-size="25.1" font-weight="normal" fill="#4a4a4a" stroke="#4a4a4a" stroke-width="0.50" textLength="84.3" lengthAdjust="spacingAndGlyphs">Boromo</text>
<text x="1344.9" y="291.9" font-size="27.2" font-weight="normal" fill="#f1efe3" stroke="#f1efe3" stroke-width="3.0" textLength="81.1" lengthAdjust="spacingAndGlyphs">Houndé</text>
<text x="1344.9" y="291.9" font-size="27.2" font-weight="normal" fill="#4a4a4a" stroke="#4a4a4a" stroke-width="0.50" textLength="81.1" lengthAdjust="spacingAndGlyphs">Houndé</text>
<text x="1154.0" y="348.9" font-size="25.1" font-weight="normal" fill="#f1efe3" stroke="#f1efe3" stroke-width="3.0" textLength="179.8" lengthAdjust="spacingAndGlyphs">Bobo Dioulasso</text>
<text x="1154.0" y="348.9" font-size="25.1" font-weight="normal" fill="#4a4a4a" stroke="#4a4a4a" stroke-width="0.50" textLength="179.8" lengthAdjust="spacingAndGlyphs">Bobo Dioulasso</text>
<text x="1442.1" y="356.3" font-size="25.1" font-weight="normal" fill="#f1efe3" stroke="#f1efe3" stroke-width="3.0" textLength="52.7" lengthAdjust="spacingAndGlyphs">Dano</text>
<text x="1442.1" y="356.3" font-size="25.1" font-weight="normal" fill="#4a4a4a" stroke="#4a4a4a" stroke-width="0.50" textLength="52.7" lengthAdjust="spacingAndGlyphs">Dano</text>
<text x="1541.6" y="376.8" font-size="23.0" font-weight="normal" fill="#f1efe3" stroke="#f1efe3" stroke-width="3.0" textLength="57.7" lengthAdjust="spacingAndGlyphs">Boura</text>
<text x="1541.6" y="376.8" font-size="23.0" font-weight="normal" fill="#4a4a4a" stroke="#4a4a4a" stroke-width="0.50" textLength="57.7" lengthAdjust="spacingAndGlyphs">Boura</text>
<text x="1625.0" y="365.6" font-size="23.8" font-weight="normal" fill="#f1efe3" stroke="#f1efe3" stroke-width="3.0" textLength="36.6" lengthAdjust="spacingAndGlyphs">Leo</text>
<text x="1625.0" y="365.6" font-size="23.8" font-weight="normal" fill="#4a4a4a" stroke="#4a4a4a" stroke-width="0.50" textLength="36.6" lengthAdjust="spacingAndGlyphs">Leo</text>
<text x="1805.1" y="351.9" font-size="25.1" font-weight="normal" fill="#f1efe3" stroke="#f1efe3" stroke-width="3.0" textLength="26.3" lengthAdjust="spacingAndGlyphs">Pô</text>
<text x="1805.1" y="351.9" font-size="25.1" font-weight="normal" fill="#4a4a4a" stroke="#4a4a4a" stroke-width="0.50" textLength="26.3" lengthAdjust="spacingAndGlyphs">Pô</text>
<text x="1796.3" y="259.6" font-size="23.0" font-weight="normal" fill="#f1efe3" stroke="#f1efe3" stroke-width="3.0" textLength="70.3" lengthAdjust="spacingAndGlyphs">Manga</text>
<text x="1796.3" y="259.6" font-size="23.0" font-weight="normal" fill="#4a4a4a" stroke="#4a4a4a" stroke-width="0.50" textLength="70.3" lengthAdjust="spacingAndGlyphs">Manga</text>
<text x="1469.9" y="450.5" font-size="21.7" font-weight="normal" fill="#f1efe3" stroke="#f1efe3" stroke-width="3.0" textLength="58.6" lengthAdjust="spacingAndGlyphs">Lawra</text>
<text x="1469.9" y="450.5" font-size="21.7" font-weight="normal" fill="#4a4a4a" stroke="#4a4a4a" stroke-width="0.50" textLength="58.6" lengthAdjust="spacingAndGlyphs">Lawra</text>
<text x="1415.7" y="507.9" font-size="22.2" font-weight="normal" fill="#f1efe3" stroke="#f1efe3" stroke-width="3.0" textLength="64.4" lengthAdjust="spacingAndGlyphs">Gaoua</text>
<text x="1415.7" y="507.9" font-size="22.2" font-weight="normal" fill="#4a4a4a" stroke="#4a4a4a" stroke-width="0.50" textLength="64.4" lengthAdjust="spacingAndGlyphs">Gaoua</text>
<text x="1812.4" y="423.6" font-size="23.0" font-weight="normal" fill="#f1efe3" stroke="#f1efe3" stroke-width="3.0" textLength="118.6" lengthAdjust="spacingAndGlyphs">Bolgatanga</text>
<text x="1812.4" y="423.6" font-size="23.0" font-weight="normal" fill="#4a4a4a" stroke="#4a4a4a" stroke-width="0.50" textLength="118.6" lengthAdjust="spacingAndGlyphs">Bolgatanga</text>
<text x="1638.2" y="160.1" font-size="33.5" font-weight="bold" fill="#f4f2ea" stroke="#f4f2ea" stroke-width="2.5" textLength="204.9" lengthAdjust="spacingAndGlyphs">Burkina Faso</text>
<text x="1638.2" y="160.1" font-size="33.5" font-weight="bold" fill="#252525" stroke="#252525" stroke-width="0.20" textLength="204.9" lengthAdjust="spacingAndGlyphs">Burkina Faso</text>
<text x="2008.6" y="187.3" font-size="24.3" font-weight="normal" fill="#f1efe3" stroke="#f1efe3" stroke-width="3.0" textLength="166.9" lengthAdjust="spacingAndGlyphs">Fada N'gourma</text>
<text x="2008.6" y="187.3" font-size="24.3" font-weight="normal" fill="#4a4a4a" stroke="#4a4a4a" stroke-width="0.50" textLength="166.9" lengthAdjust="spacingAndGlyphs">Fada N'gourma</text>
<text x="1901.7" y="237.7" font-size="24.3" font-weight="normal" fill="#f1efe3" stroke="#f1efe3" stroke-width="3.0" textLength="117.1" lengthAdjust="spacingAndGlyphs">Tenkodogo</text>
<text x="1901.7" y="237.7" font-size="24.3" font-weight="normal" fill="#4a4a4a" stroke="#4a4a4a" stroke-width="0.50" textLength="117.1" lengthAdjust="spacingAndGlyphs">Tenkodogo</text>
<text x="1991.3" y="291.9" font-size="23.0" font-weight="normal" fill="#f1efe3" stroke="#f1efe3" stroke-width="3.0" textLength="91.3" lengthAdjust="spacingAndGlyphs">Ouargaye</text>
<text x="1991.3" y="291.9" font-size="23.0" font-weight="normal" fill="#4a4a4a" stroke="#4a4a4a" stroke-width="0.50" textLength="91.3" lengthAdjust="spacingAndGlyphs">Ouargaye</text>
<text x="2017.7" y="410.4" font-size="23.0" font-weight="normal" fill="#f1efe3" stroke="#f1efe3" stroke-width="3.0" textLength="91.3" lengthAdjust="spacingAndGlyphs">Dapaong</text>
<text x="2017.7" y="410.4" font-size="23.0" font-weight="normal" fill="#4a4a4a" stroke="#4a4a4a" stroke-width="0.50" textLength="91.3" lengthAdjust="spacingAndGlyphs">Dapaong</text>
<text x="1983.1" y="473.4" font-size="20.9" font-weight="normal" fill="#f1efe3" stroke="#f1efe3" stroke-width="3.0" textLength="121.5" lengthAdjust="spacingAndGlyphs">Bunkpurugu</text>
<text x="1983.1" y="473.4" font-size="20.9" font-weight="normal" fill="#4a4a4a" stroke="#4a4a4a" stroke-width="0.50" textLength="121.5" lengthAdjust="spacingAndGlyphs">Bunkpurugu</text>
<text x="2206.2" y="452.0" font-size="23.8" font-weight="normal" fill="#f1efe3" stroke="#f1efe3" stroke-width="3.0" textLength="102.5" lengthAdjust="spacingAndGlyphs">Tanguieta</text>
<text x="2206.2" y="452.0" font-size="23.8" font-weight="normal" fill="#4a4a4a" stroke="#4a4a4a" stroke-width="0.50" textLength="102.5" lengthAdjust="spacingAndGlyphs">Tanguieta</text>
<text x="2224.1" y="512.0" font-size="23.8" font-weight="normal" fill="#f1efe3" stroke="#f1efe3" stroke-width="3.0" textLength="107.4" lengthAdjust="spacingAndGlyphs">Natitingou</text>
<text x="2224.1" y="512.0" font-size="23.8" font-weight="normal" fill="#4a4a4a" stroke="#4a4a4a" stroke-width="0.50" textLength="107.4" lengthAdjust="spacingAndGlyphs">Natitingou</text>
<text x="2379.8" y="415.7" font-size="24.3" font-weight="normal" fill="#f1efe3" stroke="#f1efe3" stroke-width="3.0" textLength="62.4" lengthAdjust="spacingAndGlyphs">Kérou</text>
<text x="2379.8" y="415.7" font-size="24.3" font-weight="normal" fill="#4a4a4a" stroke="#4a4a4a" stroke-width="0.50" textLength="62.4" lengthAdjust="spacingAndGlyphs">Kérou</text>
<text x="2530.0" y="359.2" font-size="26.3" font-weight="normal" fill="#f1efe3" stroke="#f1efe3" stroke-width="3.0" textLength="60.9" lengthAdjust="spacingAndGlyphs">Kandi</text>
<text x="2530.0" y="359.2" font-size="26.3" font-weight="normal" fill="#4a4a4a" stroke="#4a4a4a" stroke-width="0.50" textLength="60.9" lengthAdjust="spacingAndGlyphs">Kandi</text>
<text x="2424.6" y="520.2" font-size="33.5" font-weight="bold" fill="#f4f2ea" stroke="#f4f2ea" stroke-width="2.5" textLength="87.0" lengthAdjust="spacingAndGlyphs">Benin</text>
<text x="2424.6" y="520.2" font-size="33.5" font-weight="bold" fill="#252525" stroke="#252525" stroke-width="0.20" textLength="87.0" lengthAdjust="spacingAndGlyphs">Benin</text>
<text x="1874.8" y="151.3" font-size="23.0" font-weight="normal" fill="#f1efe3" stroke="#f1efe3" stroke-width="3.0" textLength="74.7" lengthAdjust="spacingAndGlyphs">Zorgho</text>
<text x="1874.8" y="151.3" font-size="23.0" font-weight="normal" fill="#4a4a4a" stroke="#4a4a4a" stroke-width="0.50" textLength="74.7" lengthAdjust="spacingAndGlyphs">Zorgho</text>
<text x="2631.0" y="218.7" font-size="25.1" font-weight="normal" fill="#f1efe3" stroke="#f1efe3" stroke-width="3.0" textLength="49.8" lengthAdjust="spacingAndGlyphs">Gaya</text>
<text x="2631.0" y="218.7" font-size="25.1" font-weight="normal" fill="#4a4a4a" stroke="#4a4a4a" stroke-width="0.50" textLength="49.8" lengthAdjust="spacingAndGlyphs">Gaya</text>
<text x="3203.6" y="165.1" font-size="23.8" font-weight="normal" fill="#f1efe3" stroke="#f1efe3" stroke-width="3.0" textLength="70.3" lengthAdjust="spacingAndGlyphs">Gusau</text>
<text x="3203.6" y="165.1" font-size="23.8" font-weight="normal" fill="#4a4a4a" stroke="#4a4a4a" stroke-width="0.50" textLength="70.3" lengthAdjust="spacingAndGlyphs">Gusau</text>
<text x="2653.6" y="396.5" font-size="23.8" font-weight="normal" fill="#f1efe3" stroke="#f1efe3" stroke-width="3.0" textLength="90.2" lengthAdjust="spacingAndGlyphs">Ségbana</text>
<text x="2653.6" y="396.5" font-size="23.8" font-weight="normal" fill="#4a4a4a" stroke="#4a4a4a" stroke-width="0.50" textLength="90.2" lengthAdjust="spacingAndGlyphs">Ségbana</text>
<text x="2612.9" y="516.0" font-size="23.0" font-weight="normal" fill="#f1efe3" stroke="#f1efe3" stroke-width="3.0" textLength="59.2" lengthAdjust="spacingAndGlyphs">Kalalè</text>
<text x="2612.9" y="516.0" font-size="23.0" font-weight="normal" fill="#4a4a4a" stroke="#4a4a4a" stroke-width="0.50" textLength="59.2" lengthAdjust="spacingAndGlyphs">Kalalè</text>
<text x="2973.7" y="495.4" font-size="20.9" font-weight="normal" fill="#f1efe3" stroke="#f1efe3" stroke-width="3.0" textLength="96.6" lengthAdjust="spacingAndGlyphs">Kontagora</text>
<text x="2973.7" y="495.4" font-size="20.9" font-weight="normal" fill="#4a4a4a" stroke="#4a4a4a" stroke-width="0.50" textLength="96.6" lengthAdjust="spacingAndGlyphs">Kontagora</text>
<text x="555.5" y="570.6" font-size="23.0" font-weight="normal" fill="#f1efe3" stroke="#f1efe3" stroke-width="3.0" textLength="87.8" lengthAdjust="spacingAndGlyphs">Maninian</text>
<text x="555.5" y="570.6" font-size="23.0" font-weight="normal" fill="#4a4a4a" stroke="#4a4a4a" stroke-width="0.50" textLength="87.8" lengthAdjust="spacingAndGlyphs">Maninian</text>
<text x="832.8" y="590.3" font-size="21.7" font-weight="normal" fill="#f1efe3" stroke="#f1efe3" stroke-width="3.0" textLength="53.6" lengthAdjust="spacingAndGlyphs">Kouto</text>
<text x="832.8" y="590.3" font-size="21.7" font-weight="normal" fill="#4a4a4a" stroke="#4a4a4a" stroke-width="0.50" textLength="53.6" lengthAdjust="spacingAndGlyphs">Kouto</text>
<text x="605.3" y="659.9" font-size="27.2" font-weight="normal" fill="#f1efe3" stroke="#f1efe3" stroke-width="3.0" textLength="88.4" lengthAdjust="spacingAndGlyphs">Odienné</text>
<text x="605.3" y="659.9" font-size="27.2" font-weight="normal" fill="#4a4a4a" stroke="#4a4a4a" stroke-width="0.50" textLength="88.4" lengthAdjust="spacingAndGlyphs">Odienné</text>
<text x="797.1" y="656.4" font-size="25.1" font-weight="normal" fill="#f1efe3" stroke="#f1efe3" stroke-width="3.0" textLength="99.5" lengthAdjust="spacingAndGlyphs">Boundiali</text>
<text x="797.1" y="656.4" font-size="25.1" font-weight="normal" fill="#4a4a4a" stroke="#4a4a4a" stroke-width="0.50" textLength="99.5" lengthAdjust="spacingAndGlyphs">Boundiali</text>
<text x="951.7" y="668.1" font-size="28.4" font-weight="normal" fill="#f1efe3" stroke="#f1efe3" stroke-width="3.0" textLength="98.1" lengthAdjust="spacingAndGlyphs">Korhogo</text>
<text x="951.7" y="668.1" font-size="28.4" font-weight="normal" fill="#4a4a4a" stroke="#4a4a4a" stroke-width="0.50" textLength="98.1" lengthAdjust="spacingAndGlyphs">Korhogo</text>
<text x="596.5" y="885.4" font-size="25.1" font-weight="normal" fill="#f1efe3" stroke="#f1efe3" stroke-width="3.0" textLength="62.9" lengthAdjust="spacingAndGlyphs">Touba</text>
<text x="596.5" y="885.4" font-size="25.1" font-weight="normal" fill="#4a4a4a" stroke="#4a4a4a" stroke-width="0.50" textLength="62.9" lengthAdjust="spacingAndGlyphs">Touba</text>
<text x="767.2" y="943.9" font-size="25.9" font-weight="normal" fill="#f1efe3" stroke="#f1efe3" stroke-width="3.0" textLength="87.0" lengthAdjust="spacingAndGlyphs">Séguéla</text>
<text x="767.2" y="943.9" font-size="25.9" font-weight="normal" fill="#4a4a4a" stroke="#4a4a4a" stroke-width="0.50" textLength="87.0" lengthAdjust="spacingAndGlyphs">Séguéla</text>
<text x="1061.5" y="911.7" font-size="25.1" font-weight="normal" fill="#f1efe3" stroke="#f1efe3" stroke-width="3.0" textLength="72.3" lengthAdjust="spacingAndGlyphs">Katiola</text>
<text x="1061.5" y="911.7" font-size="25.1" font-weight="normal" fill="#4a4a4a" stroke="#4a4a4a" stroke-width="0.50" textLength="72.3" lengthAdjust="spacingAndGlyphs">Katiola</text>
<text x="456.0" y="812.2" font-size="20.9" font-weight="normal" fill="#f1efe3" stroke="#f1efe3" stroke-width="3.0" textLength="22.0" lengthAdjust="spacingAndGlyphs">yla</text>
<text x="456.0" y="812.2" font-size="20.9" font-weight="normal" fill="#4a4a4a" stroke="#4a4a4a" stroke-width="0.50" textLength="22.0" lengthAdjust="spacingAndGlyphs">yla</text>
<text x="1295.1" y="560.4" font-size="23.0" font-weight="normal" fill="#f1efe3" stroke="#f1efe3" stroke-width="3.0" textLength="72.3" lengthAdjust="spacingAndGlyphs">Djigoué</text>
<text x="1295.1" y="560.4" font-size="23.0" font-weight="normal" fill="#4a4a4a" stroke="#4a4a4a" stroke-width="0.50" textLength="72.3" lengthAdjust="spacingAndGlyphs">Djigoué</text>
<text x="1470.8" y="593.2" font-size="21.7" font-weight="normal" fill="#f1efe3" stroke="#f1efe3" stroke-width="3.0" textLength="48.0" lengthAdjust="spacingAndGlyphs">Batié</text>
<text x="1470.8" y="593.2" font-size="21.7" font-weight="normal" fill="#4a4a4a" stroke="#4a4a4a" stroke-width="0.50" textLength="48.0" lengthAdjust="spacingAndGlyphs">Batié</text>
<text x="1450.3" y="703.9" font-size="23.0" font-weight="normal" fill="#f1efe3" stroke="#f1efe3" stroke-width="3.0" textLength="60.6" lengthAdjust="spacingAndGlyphs">Bouna</text>
<text x="1450.3" y="703.9" font-size="23.0" font-weight="normal" fill="#4a4a4a" stroke="#4a4a4a" stroke-width="0.50" textLength="60.6" lengthAdjust="spacingAndGlyphs">Bouna</text>
<text x="1163.3" y="727.3" font-size="25.1" font-weight="normal" fill="#f1efe3" stroke="#f1efe3" stroke-width="3.0" textLength="46.8" lengthAdjust="spacingAndGlyphs">Kong</text>
<text x="1163.3" y="727.3" font-size="25.1" font-weight="normal" fill="#4a4a4a" stroke="#4a4a4a" stroke-width="0.50" textLength="46.8" lengthAdjust="spacingAndGlyphs">Kong</text>
<text x="1456.7" y="929.3" font-size="25.1" font-weight="normal" fill="#f1efe3" stroke="#f1efe3" stroke-width="3.0" textLength="120.0" lengthAdjust="spacingAndGlyphs">Bondoukou</text>
<text x="1456.7" y="929.3" font-size="25.1" font-weight="normal" fill="#4a4a4a" stroke="#4a4a4a" stroke-width="0.50" textLength="120.0" lengthAdjust="spacingAndGlyphs">Bondoukou</text>
<text x="1238.6" y="782.3" font-size="24.3" font-weight="normal" fill="#eef3e0" stroke="#eef3e0" stroke-width="3.0" textLength="216.7" lengthAdjust="spacingAndGlyphs">Comoé National Park</text>
<text x="1238.6" y="782.3" font-size="24.3" font-weight="normal" fill="#4e8e3c" stroke="#4e8e3c" stroke-width="0.50" textLength="216.7" lengthAdjust="spacingAndGlyphs">Comoé National Park</text>
<text x="1601.6" y="698.6" font-size="24.7" font-weight="normal" fill="#eef3e0" stroke="#eef3e0" stroke-width="3.0" textLength="194.7" lengthAdjust="spacingAndGlyphs">Mole National Park</text>
<text x="1601.6" y="698.6" font-size="24.7" font-weight="normal" fill="#4e8e3c" stroke="#4e8e3c" stroke-width="0.50" textLength="194.7" lengthAdjust="spacingAndGlyphs">Mole National Park</text>
<text x="1944.5" y="585.3" font-size="23.0" font-weight="normal" fill="#f1efe3" stroke="#f1efe3" stroke-width="3.0" textLength="84.0" lengthAdjust="spacingAndGlyphs">Gushegu</text>
<text x="1944.5" y="585.3" font-size="23.0" font-weight="normal" fill="#4a4a4a" stroke="#4a4a4a" stroke-width="0.50" textLength="84.0" lengthAdjust="spacingAndGlyphs">Gushegu</text>
<text x="2491.1" y="595.5" font-size="23.0" font-weight="normal" fill="#f1efe3" stroke="#f1efe3" stroke-width="3.0" textLength="60.0" lengthAdjust="spacingAndGlyphs">N'Dali</text>
<text x="2491.1" y="595.5" font-size="23.0" font-weight="normal" fill="#4a4a4a" stroke="#4a4a4a" stroke-width="0.50" textLength="60.0" lengthAdjust="spacingAndGlyphs">N'Dali</text>
<text x="2285.3" y="621.9" font-size="23.8" font-weight="normal" fill="#f1efe3" stroke="#f1efe3" stroke-width="3.0" textLength="88.7" lengthAdjust="spacingAndGlyphs">Djougou</text>
<text x="2285.3" y="621.9" font-size="23.8" font-weight="normal" fill="#4a4a4a" stroke="#4a4a4a" stroke-width="0.50" textLength="88.7" lengthAdjust="spacingAndGlyphs">Djougou</text>
<text x="2220.3" y="652.0" font-size="22.2" font-weight="normal" fill="#f1efe3" stroke="#f1efe3" stroke-width="3.0" textLength="48.3" lengthAdjust="spacingAndGlyphs">Kara</text>
<text x="2220.3" y="652.0" font-size="22.2" font-weight="normal" fill="#4a4a4a" stroke="#4a4a4a" stroke-width="0.50" textLength="48.3" lengthAdjust="spacingAndGlyphs">Kara</text>
<text x="1999.2" y="671.6" font-size="23.0" font-weight="normal" fill="#f1efe3" stroke="#f1efe3" stroke-width="3.0" textLength="51.8" lengthAdjust="spacingAndGlyphs">Yendi</text>
<text x="1999.2" y="671.6" font-size="23.0" font-weight="normal" fill="#4a4a4a" stroke="#4a4a4a" stroke-width="0.50" textLength="51.8" lengthAdjust="spacingAndGlyphs">Yendi</text>
<text x="2460.3" y="690.1" font-size="24.3" font-weight="normal" fill="#f1efe3" stroke="#f1efe3" stroke-width="3.0" textLength="89.3" lengthAdjust="spacingAndGlyphs">Parakou</text>
<text x="2460.3" y="690.1" font-size="24.3" font-weight="normal" fill="#4a4a4a" stroke="#4a4a4a" stroke-width="0.50" textLength="89.3" lengthAdjust="spacingAndGlyphs">Parakou</text>
<text x="2133.0" y="705.9" font-size="23.8" font-weight="normal" fill="#f1efe3" stroke="#f1efe3" stroke-width="3.0" textLength="71.1" lengthAdjust="spacingAndGlyphs">Bassar</text>
<text x="2133.0" y="705.9" font-size="23.8" font-weight="normal" fill="#4a4a4a" stroke="#4a4a4a" stroke-width="0.50" textLength="71.1" lengthAdjust="spacingAndGlyphs">Bassar</text>
<text x="2294.9" y="754.5" font-size="22.2" font-weight="normal" fill="#f1efe3" stroke="#f1efe3" stroke-width="3.0" textLength="68.8" lengthAdjust="spacingAndGlyphs">Bassila</text>
<text x="2294.9" y="754.5" font-size="22.2" font-weight="normal" fill="#4a4a4a" stroke="#4a4a4a" stroke-width="0.50" textLength="68.8" lengthAdjust="spacingAndGlyphs">Bassila</text>
<text x="2442.8" y="773.2" font-size="23.8" font-weight="normal" fill="#f1efe3" stroke="#f1efe3" stroke-width="3.0" textLength="111.3" lengthAdjust="spacingAndGlyphs">Tchaourou</text>
<text x="2442.8" y="773.2" font-size="23.8" font-weight="normal" fill="#4a4a4a" stroke="#4a4a4a" stroke-width="0.50" textLength="111.3" lengthAdjust="spacingAndGlyphs">Tchaourou</text>
<text x="1995.4" y="780.0" font-size="23.0" font-weight="normal" fill="#f1efe3" stroke="#f1efe3" stroke-width="3.0" textLength="82.0" lengthAdjust="spacingAndGlyphs">Bimbilla</text>
<text x="1995.4" y="780.0" font-size="23.0" font-weight="normal" fill="#4a4a4a" stroke="#4a4a4a" stroke-width="0.50" textLength="82.0" lengthAdjust="spacingAndGlyphs">Bimbilla</text>
<text x="2178.7" y="810.7" font-size="35.6" font-weight="bold" fill="#f4f2ea" stroke="#f4f2ea" stroke-width="2.5" textLength="75.2" lengthAdjust="spacingAndGlyphs">Togo</text>
<text x="2178.7" y="810.7" font-size="35.6" font-weight="bold" fill="#252525" stroke="#252525" stroke-width="0.20" textLength="75.2" lengthAdjust="spacingAndGlyphs">Togo</text>
<text x="1982.2" y="853.2" font-size="23.0" font-weight="normal" fill="#f1efe3" stroke="#f1efe3" stroke-width="3.0" textLength="84.3" lengthAdjust="spacingAndGlyphs">Kpandae</text>
<text x="1982.2" y="853.2" font-size="23.0" font-weight="normal" fill="#4a4a4a" stroke="#4a4a4a" stroke-width="0.50" textLength="84.3" lengthAdjust="spacingAndGlyphs">Kpandae</text>
<text x="2345.3" y="949.8" font-size="23.0" font-weight="normal" fill="#f1efe3" stroke="#f1efe3" stroke-width="3.0" textLength="81.4" lengthAdjust="spacingAndGlyphs">Savalou</text>
<text x="2345.3" y="949.8" font-size="23.0" font-weight="normal" fill="#4a4a4a" stroke="#4a4a4a" stroke-width="0.50" textLength="81.4" lengthAdjust="spacingAndGlyphs">Savalou</text>
<text x="1830.6" y="677.5" font-size="23.0" font-weight="normal" fill="#f1efe3" stroke="#f1efe3" stroke-width="3.0" textLength="85.5" lengthAdjust="spacingAndGlyphs">Tamale</text>
<text x="1830.6" y="677.5" font-size="23.0" font-weight="normal" fill="#4a4a4a" stroke="#4a4a4a" stroke-width="0.50" textLength="85.5" lengthAdjust="spacingAndGlyphs">Tamale</text>
<text x="2584.2" y="580.9" font-size="25.1" font-weight="normal" fill="#f1efe3" stroke="#f1efe3" stroke-width="3.0" textLength="52.7" lengthAdjust="spacingAndGlyphs">Nikki</text>
<text x="2584.2" y="580.9" font-size="25.1" font-weight="normal" fill="#4a4a4a" stroke="#4a4a4a" stroke-width="0.50" textLength="52.7" lengthAdjust="spacingAndGlyphs">Nikki</text>
<text x="3183.1" y="637.4" font-size="24.3" font-weight="normal" fill="#f1efe3" stroke="#f1efe3" stroke-width="3.0" textLength="70.3" lengthAdjust="spacingAndGlyphs">Minna</text>
<text x="3183.1" y="637.4" font-size="24.3" font-weight="normal" fill="#4a4a4a" stroke="#4a4a4a" stroke-width="0.50" textLength="70.3" lengthAdjust="spacingAndGlyphs">Minna</text>
<text x="3099.6" y="739.0" font-size="23.0" font-weight="normal" fill="#f1efe3" stroke="#f1efe3" stroke-width="3.0" textLength="42.5" lengthAdjust="spacingAndGlyphs">Bida</text>
<text x="3099.6" y="739.0" font-size="23.0" font-weight="normal" fill="#4a4a4a" stroke="#4a4a4a" stroke-width="0.50" textLength="42.5" lengthAdjust="spacingAndGlyphs">Bida</text>
<text x="2978.1" y="780.0" font-size="25.1" font-weight="normal" fill="#f1efe3" stroke="#f1efe3" stroke-width="3.0" textLength="68.8" lengthAdjust="spacingAndGlyphs">Lafiagi</text>
<text x="2978.1" y="780.0" font-size="25.1" font-weight="normal" fill="#4a4a4a" stroke="#4a4a4a" stroke-width="0.50" textLength="68.8" lengthAdjust="spacingAndGlyphs">Lafiagi</text>
<text x="2824.3" y="844.5" font-size="27.2" font-weight="normal" fill="#f1efe3" stroke="#f1efe3" stroke-width="3.0" textLength="60.0" lengthAdjust="spacingAndGlyphs">Ilorin</text>
<text x="2824.3" y="844.5" font-size="27.2" font-weight="normal" fill="#4a4a4a" stroke="#4a4a4a" stroke-width="0.50" textLength="60.0" lengthAdjust="spacingAndGlyphs">Ilorin</text>
<text x="2731.5" y="911.0" font-size="25.9" font-weight="normal" fill="#f1efe3" stroke="#f1efe3" stroke-width="3.0" textLength="136.8" lengthAdjust="spacingAndGlyphs">Ogbomosho</text>
<text x="2731.5" y="911.0" font-size="25.9" font-weight="normal" fill="#4a4a4a" stroke="#4a4a4a" stroke-width="0.50" textLength="136.8" lengthAdjust="spacingAndGlyphs">Ogbomosho</text>
<text x="961.0" y="988.5" font-size="37.6" font-weight="bold" fill="#f4f2ea" stroke="#f4f2ea" stroke-width="2.5" textLength="171.3" lengthAdjust="spacingAndGlyphs">Ivory Coast</text>
<text x="961.0" y="988.5" font-size="37.6" font-weight="bold" fill="#252525" stroke="#252525" stroke-width="0.20" textLength="171.3" lengthAdjust="spacingAndGlyphs">Ivory Coast</text>
<text x="629.6" y="1045.6" font-size="23.0" font-weight="normal" fill="#f1efe3" stroke="#f1efe3" stroke-width="3.0" textLength="44.5" lengthAdjust="spacingAndGlyphs">Man</text>
<text x="629.6" y="1045.6" font-size="23.0" font-weight="normal" fill="#4a4a4a" stroke="#4a4a4a" stroke-width="0.50" textLength="44.5" lengthAdjust="spacingAndGlyphs">Man</text>
<text x="456.0" y="1055.2" font-size="22.2" font-weight="normal" fill="#f1efe3" stroke="#f1efe3" stroke-width="3.0" textLength="49.8" lengthAdjust="spacingAndGlyphs">uellie</text>
<text x="456.0" y="1055.2" font-size="22.2" font-weight="normal" fill="#4a4a4a" stroke="#4a4a4a" stroke-width="0.50" textLength="49.8" lengthAdjust="spacingAndGlyphs">uellie</text>
<text x="819.0" y="1141.6" font-size="26.3" font-weight="normal" fill="#f1efe3" stroke="#f1efe3" stroke-width="3.0" textLength="65.9" lengthAdjust="spacingAndGlyphs">Daloa</text>
<text x="819.0" y="1141.6" font-size="26.3" font-weight="normal" fill="#4a4a4a" stroke="#4a4a4a" stroke-width="0.50" textLength="65.9" lengthAdjust="spacingAndGlyphs">Daloa</text>
<text x="973.6" y="1151.0" font-size="28.4" font-weight="normal" fill="#f1efe3" stroke="#f1efe3" stroke-width="3.0" textLength="185.0" lengthAdjust="spacingAndGlyphs">Yamoussoukro</text>
<text x="973.6" y="1151.0" font-size="28.4" font-weight="normal" fill="#4a4a4a" stroke="#4a4a4a" stroke-width="0.50" textLength="185.0" lengthAdjust="spacingAndGlyphs">Yamoussoukro</text>
<text x="641.3" y="1168.0" font-size="24.3" font-weight="normal" fill="#f1efe3" stroke="#f1efe3" stroke-width="3.0" textLength="94.3" lengthAdjust="spacingAndGlyphs">Duekoue</text>
<text x="641.3" y="1168.0" font-size="24.3" font-weight="normal" fill="#4a4a4a" stroke="#4a4a4a" stroke-width="0.50" textLength="94.3" lengthAdjust="spacingAndGlyphs">Duekoue</text>
<text x="505.8" y="1291.5" font-size="23.0" font-weight="normal" fill="#f1efe3" stroke="#f1efe3" stroke-width="3.0" textLength="79.0" lengthAdjust="spacingAndGlyphs">Zwedru</text>
<text x="505.8" y="1291.5" font-size="23.0" font-weight="normal" fill="#4a4a4a" stroke="#4a4a4a" stroke-width="0.50" textLength="79.0" lengthAdjust="spacingAndGlyphs">Zwedru</text>
<text x="902.5" y="1279.2" font-size="24.3" font-weight="normal" fill="#f1efe3" stroke="#f1efe3" stroke-width="3.0" textLength="80.5" lengthAdjust="spacingAndGlyphs">Gagnoa</text>
<text x="902.5" y="1279.2" font-size="24.3" font-weight="normal" fill="#4a4a4a" stroke="#4a4a4a" stroke-width="0.50" textLength="80.5" lengthAdjust="spacingAndGlyphs">Gagnoa</text>
<text x="1072.3" y="1255.8" font-size="24.3" font-weight="normal" fill="#f1efe3" stroke="#f1efe3" stroke-width="3.0" textLength="61.5" lengthAdjust="spacingAndGlyphs">Taabo</text>
<text x="1072.3" y="1255.8" font-size="24.3" font-weight="normal" fill="#4a4a4a" stroke="#4a4a4a" stroke-width="0.50" textLength="61.5" lengthAdjust="spacingAndGlyphs">Taabo</text>
<text x="786.8" y="1342.8" font-size="25.1" font-weight="normal" fill="#f1efe3" stroke="#f1efe3" stroke-width="3.0" textLength="77.6" lengthAdjust="spacingAndGlyphs">Soubré</text>
<text x="786.8" y="1342.8" font-size="25.1" font-weight="normal" fill="#4a4a4a" stroke="#4a4a4a" stroke-width="0.50" textLength="77.6" lengthAdjust="spacingAndGlyphs">Soubré</text>
<text x="1028.4" y="1334.8" font-size="24.3" font-weight="normal" fill="#f1efe3" stroke="#f1efe3" stroke-width="3.0" textLength="45.4" lengthAdjust="spacingAndGlyphs">Divo</text>
<text x="1028.4" y="1334.8" font-size="24.3" font-weight="normal" fill="#4a4a4a" stroke="#4a4a4a" stroke-width="0.50" textLength="45.4" lengthAdjust="spacingAndGlyphs">Divo</text>
<text x="1622.1" y="1013.4" font-size="27.2" font-weight="normal" fill="#f1efe3" stroke="#f1efe3" stroke-width="3.0" textLength="103.9" lengthAdjust="spacingAndGlyphs">Techiman</text>
<text x="1622.1" y="1013.4" font-size="27.2" font-weight="normal" fill="#4a4a4a" stroke="#4a4a4a" stroke-width="0.50" textLength="103.9" lengthAdjust="spacingAndGlyphs">Techiman</text>
<text x="1556.2" y="1056.7" font-size="26.3" font-weight="normal" fill="#f1efe3" stroke="#f1efe3" stroke-width="3.0" textLength="90.8" lengthAdjust="spacingAndGlyphs">Sunyani</text>
<text x="1556.2" y="1056.7" font-size="26.3" font-weight="normal" fill="#4a4a4a" stroke="#4a4a4a" stroke-width="0.50" textLength="90.8" lengthAdjust="spacingAndGlyphs">Sunyani</text>
<text x="1260.5" y="1110.6" font-size="25.9" font-weight="normal" fill="#f1efe3" stroke="#f1efe3" stroke-width="3.0" textLength="87.8" lengthAdjust="spacingAndGlyphs">Daoukro</text>
<text x="1260.5" y="1110.6" font-size="25.9" font-weight="normal" fill="#4a4a4a" stroke="#4a4a4a" stroke-width="0.50" textLength="87.8" lengthAdjust="spacingAndGlyphs">Daoukro</text>
<text x="1323.5" y="1170.0" font-size="25.1" font-weight="normal" fill="#f1efe3" stroke="#f1efe3" stroke-width="3.0" textLength="131.7" lengthAdjust="spacingAndGlyphs">Abengourou</text>
<text x="1323.5" y="1170.0" font-size="25.1" font-weight="normal" fill="#4a4a4a" stroke="#4a4a4a" stroke-width="0.50" textLength="131.7" lengthAdjust="spacingAndGlyphs">Abengourou</text>
<text x="1765.6" y="1155.4" font-size="33.5" font-weight="bold" fill="#f4f2ea" stroke="#f4f2ea" stroke-width="2.5" textLength="96.6" lengthAdjust="spacingAndGlyphs">Ghana</text>
<text x="1765.6" y="1155.4" font-size="33.5" font-weight="bold" fill="#252525" stroke="#252525" stroke-width="0.20" textLength="96.6" lengthAdjust="spacingAndGlyphs">Ghana</text>
<text x="1682.1" y="1264.3" font-size="25.9" font-weight="normal" fill="#f1efe3" stroke="#f1efe3" stroke-width="3.0" textLength="71.7" lengthAdjust="spacingAndGlyphs">Obuasi</text>
<text x="1682.1" y="1264.3" font-size="25.9" font-weight="normal" fill="#4a4a4a" stroke="#4a4a4a" stroke-width="0.50" textLength="71.7" lengthAdjust="spacingAndGlyphs">Obuasi</text>
<text x="1210.8" y="1316.4" font-size="25.1" font-weight="normal" fill="#f1efe3" stroke="#f1efe3" stroke-width="3.0" textLength="98.1" lengthAdjust="spacingAndGlyphs">Agboville</text>
<text x="1210.8" y="1316.4" font-size="25.1" font-weight="normal" fill="#4a4a4a" stroke="#4a4a4a" stroke-width="0.50" textLength="98.1" lengthAdjust="spacingAndGlyphs">Agboville</text>
<text x="1737.2" y="1329.6" font-size="23.0" font-weight="normal" fill="#f1efe3" stroke="#f1efe3" stroke-width="3.0" textLength="89.3" lengthAdjust="spacingAndGlyphs">Berekum</text>
<text x="1737.2" y="1329.6" font-size="23.0" font-weight="normal" fill="#4a4a4a" stroke="#4a4a4a" stroke-width="0.50" textLength="89.3" lengthAdjust="spacingAndGlyphs">Berekum</text>
<text x="1472.8" y="1249.1" font-size="23.0" font-weight="normal" fill="#eef3e0" stroke="#eef3e0" stroke-width="3.0" textLength="102.5" lengthAdjust="spacingAndGlyphs">Aboniyere</text>
<text x="1472.8" y="1249.1" font-size="23.0" font-weight="normal" fill="#4e8e3c" stroke="#4e8e3c" stroke-width="0.50" textLength="102.5" lengthAdjust="spacingAndGlyphs">Aboniyere</text>
<text x="1447.3" y="1276.9" font-size="23.0" font-weight="normal" fill="#eef3e0" stroke="#eef3e0" stroke-width="3.0" textLength="153.7" lengthAdjust="spacingAndGlyphs">Forest Reserve</text>
<text x="1447.3" y="1276.9" font-size="23.0" font-weight="normal" fill="#4e8e3c" stroke="#4e8e3c" stroke-width="0.50" textLength="153.7" lengthAdjust="spacingAndGlyphs">Forest Reserve</text>
<text x="1412.2" y="1363.2" font-size="25.1" font-weight="normal" fill="#eef3e0" stroke="#eef3e0" stroke-width="3.0" textLength="189.4" lengthAdjust="spacingAndGlyphs">Boin National Park</text>
<text x="1412.2" y="1363.2" font-size="25.1" font-weight="normal" fill="#4e8e3c" stroke="#4e8e3c" stroke-width="0.50" textLength="189.4" lengthAdjust="spacingAndGlyphs">Boin National Park</text>
<text x="1885.9" y="1095.4" font-size="25.1" font-weight="normal" fill="#eef3e0" stroke="#eef3e0" stroke-width="3.0" textLength="201.1" lengthAdjust="spacingAndGlyphs">Digya National Park</text>
<text x="1885.9" y="1095.4" font-size="25.1" font-weight="normal" fill="#4e8e3c" stroke="#4e8e3c" stroke-width="0.50" textLength="201.1" lengthAdjust="spacingAndGlyphs">Digya National Park</text>
<text x="2470.0" y="1054.4" font-size="23.0" font-weight="normal" fill="#f1efe3" stroke="#f1efe3" stroke-width="3.0" textLength="65.0" lengthAdjust="spacingAndGlyphs">Kétou</text>
<text x="2470.0" y="1054.4" font-size="23.0" font-weight="normal" fill="#4a4a4a" stroke="#4a4a4a" stroke-width="0.50" textLength="65.0" lengthAdjust="spacingAndGlyphs">Kétou</text>
<text x="2360.2" y="1087.5" font-size="24.3" font-weight="normal" fill="#f1efe3" stroke="#f1efe3" stroke-width="3.0" textLength="86.1" lengthAdjust="spacingAndGlyphs">Bohicon</text>
<text x="2360.2" y="1087.5" font-size="24.3" font-weight="normal" fill="#4a4a4a" stroke="#4a4a4a" stroke-width="0.50" textLength="86.1" lengthAdjust="spacingAndGlyphs">Bohicon</text>
<text x="2486.1" y="1123.2" font-size="23.0" font-weight="normal" fill="#f1efe3" stroke="#f1efe3" stroke-width="3.0" textLength="51.2" lengthAdjust="spacingAndGlyphs">Pobè</text>
<text x="2486.1" y="1123.2" font-size="23.0" font-weight="normal" fill="#4a4a4a" stroke="#4a4a4a" stroke-width="0.50" textLength="51.2" lengthAdjust="spacingAndGlyphs">Pobè</text>
<text x="2297.3" y="1186.1" font-size="23.0" font-weight="normal" fill="#f1efe3" stroke="#f1efe3" stroke-width="3.0" textLength="83.1" lengthAdjust="spacingAndGlyphs">Lokossa</text>
<text x="2297.3" y="1186.1" font-size="23.0" font-weight="normal" fill="#4a4a4a" stroke="#4a4a4a" stroke-width="0.50" textLength="83.1" lengthAdjust="spacingAndGlyphs">Lokossa</text>
<text x="2433.7" y="1208.7" font-size="28.0" font-weight="normal" fill="#f1efe3" stroke="#f1efe3" stroke-width="3.0" textLength="144.3" lengthAdjust="spacingAndGlyphs">Porto-Novo</text>
<text x="2433.7" y="1208.7" font-size="28.0" font-weight="normal" fill="#4a4a4a" stroke="#4a4a4a" stroke-width="0.50" textLength="144.3" lengthAdjust="spacingAndGlyphs">Porto-Novo</text>
<text x="1926.9" y="1285.7" font-size="23.0" font-weight="normal" fill="#f1efe3" stroke="#f1efe3" stroke-width="3.0" textLength="103.9" lengthAdjust="spacingAndGlyphs">Koforidua</text>
<text x="1926.9" y="1285.7" font-size="23.0" font-weight="normal" fill="#4a4a4a" stroke="#4a4a4a" stroke-width="0.50" textLength="103.9" lengthAdjust="spacingAndGlyphs">Koforidua</text>
<text x="2213.8" y="1274.8" font-size="26.3" font-weight="normal" fill="#f1efe3" stroke="#f1efe3" stroke-width="3.0" textLength="68.5" lengthAdjust="spacingAndGlyphs">Lomé</text>
<text x="2213.8" y="1274.8" font-size="26.3" font-weight="normal" fill="#4a4a4a" stroke="#4a4a4a" stroke-width="0.50" textLength="68.5" lengthAdjust="spacingAndGlyphs">Lomé</text>
<text x="2813.5" y="975.3" font-size="23.0" font-weight="normal" fill="#f1efe3" stroke="#f1efe3" stroke-width="3.0" textLength="84.1" lengthAdjust="spacingAndGlyphs">Osogbo</text>
<text x="2813.5" y="975.3" font-size="23.0" font-weight="normal" fill="#4a4a4a" stroke="#4a4a4a" stroke-width="0.50" textLength="84.1" lengthAdjust="spacingAndGlyphs">Osogbo</text>
<text x="2926.3" y="1004.6" font-size="25.1" font-weight="normal" fill="#f1efe3" stroke="#f1efe3" stroke-width="3.0" textLength="100.2" lengthAdjust="spacingAndGlyphs">Ado Ekiti</text>
<text x="2926.3" y="1004.6" font-size="25.1" font-weight="normal" fill="#4a4a4a" stroke="#4a4a4a" stroke-width="0.50" textLength="100.2" lengthAdjust="spacingAndGlyphs">Ado Ekiti</text>
<text x="2842.8" y="1031.0" font-size="23.0" font-weight="normal" fill="#f1efe3" stroke="#f1efe3" stroke-width="3.0" textLength="24.6" lengthAdjust="spacingAndGlyphs">Ife</text>
<text x="2842.8" y="1031.0" font-size="23.0" font-weight="normal" fill="#4a4a4a" stroke="#4a4a4a" stroke-width="0.50" textLength="24.6" lengthAdjust="spacingAndGlyphs">Ife</text>
<text x="2694.6" y="1049.1" font-size="28.0" font-weight="normal" fill="#f1efe3" stroke="#f1efe3" stroke-width="3.0" textLength="82.9" lengthAdjust="spacingAndGlyphs">Ibadan</text>
<text x="2694.6" y="1049.1" font-size="28.0" font-weight="normal" fill="#4a4a4a" stroke="#4a4a4a" stroke-width="0.50" textLength="82.9" lengthAdjust="spacingAndGlyphs">Ibadan</text>
<text x="2937.1" y="1072.8" font-size="24.3" font-weight="normal" fill="#f1efe3" stroke="#f1efe3" stroke-width="3.0" textLength="68.8" lengthAdjust="spacingAndGlyphs">Akure</text>
<text x="2937.1" y="1072.8" font-size="24.3" font-weight="normal" fill="#4a4a4a" stroke="#4a4a4a" stroke-width="0.50" textLength="68.8" lengthAdjust="spacingAndGlyphs">Akure</text>
<text x="3218.3" y="976.8" font-size="20.9" font-weight="normal" fill="#f1efe3" stroke="#f1efe3" stroke-width="3.0" textLength="102.5" lengthAdjust="spacingAndGlyphs">Lokoja</text>
<text x="3218.3" y="976.8" font-size="20.9" font-weight="normal" fill="#4a4a4a" stroke="#4a4a4a" stroke-width="0.50" textLength="102.5" lengthAdjust="spacingAndGlyphs">Lokoja</text>
<text x="471.2" y="1548.4" font-size="27.3" font-weight="normal" fill="#f1efe3" stroke="#f1efe3" stroke-width="3.0" textLength="112.5" lengthAdjust="spacingAndGlyphs">Barclayville</text>
<text x="471.2" y="1548.4" font-size="27.3" font-weight="normal" fill="#4a4a4a" stroke="#4a4a4a" stroke-width="0.50" textLength="112.5" lengthAdjust="spacingAndGlyphs">Barclayville</text>
<text x="586.4" y="1602.7" font-size="28.7" font-weight="normal" fill="#f1efe3" stroke="#f1efe3" stroke-width="3.0" textLength="75.0" lengthAdjust="spacingAndGlyphs">Harper</text>
<text x="586.4" y="1602.7" font-size="28.7" font-weight="normal" fill="#4a4a4a" stroke="#4a4a4a" stroke-width="0.50" textLength="75.0" lengthAdjust="spacingAndGlyphs">Harper</text>
<text x="757.6" y="1532.0" font-size="31.4" font-weight="normal" fill="#f1efe3" stroke="#f1efe3" stroke-width="3.0" textLength="119.6" lengthAdjust="spacingAndGlyphs">San Pédro</text>
<text x="757.6" y="1532.0" font-size="31.4" font-weight="normal" fill="#4a4a4a" stroke="#4a4a4a" stroke-width="0.50" textLength="119.6" lengthAdjust="spacingAndGlyphs">San Pédro</text>
<text x="1247.8" y="1475.0" font-size="31.0" font-weight="normal" fill="#f1efe3" stroke="#f1efe3" stroke-width="3.0" textLength="94.1" lengthAdjust="spacingAndGlyphs">Abidjan</text>
<text x="1247.8" y="1475.0" font-size="31.0" font-weight="normal" fill="#4a4a4a" stroke="#4a4a4a" stroke-width="0.50" textLength="94.1" lengthAdjust="spacingAndGlyphs">Abidjan</text>
<text x="1655.5" y="1469.6" font-size="27.3" font-weight="normal" fill="#f1efe3" stroke="#f1efe3" stroke-width="3.0" textLength="91.3" lengthAdjust="spacingAndGlyphs">Sekondi-</text>
<text x="1655.5" y="1469.6" font-size="27.3" font-weight="normal" fill="#4a4a4a" stroke="#4a4a4a" stroke-width="0.50" textLength="91.3" lengthAdjust="spacingAndGlyphs">Sekondi-</text>
<text x="1657.0" y="1499.5" font-size="27.3" font-weight="normal" fill="#f1efe3" stroke="#f1efe3" stroke-width="3.0" textLength="100.6" lengthAdjust="spacingAndGlyphs">Takoradi</text>
<text x="1657.0" y="1499.5" font-size="27.3" font-weight="normal" fill="#4a4a4a" stroke="#4a4a4a" stroke-width="0.50" textLength="100.6" lengthAdjust="spacingAndGlyphs">Takoradi</text>
<text x="545.7" y="1453.3" font-size="25.7" font-weight="normal" fill="#f1efe3" stroke="#f1efe3" stroke-width="3.0" textLength="95.1" lengthAdjust="spacingAndGlyphs">Fish Town</text>
<text x="545.7" y="1453.3" font-size="25.7" font-weight="normal" fill="#4a4a4a" stroke="#4a4a4a" stroke-width="0.50" textLength="95.1" lengthAdjust="spacingAndGlyphs">Fish Town</text>
<text x="641.9" y="1416.3" font-size="28.7" font-weight="normal" fill="#eef3e0" stroke="#eef3e0" stroke-width="3.0" textLength="176.6" lengthAdjust="spacingAndGlyphs">Taï National Park</text>
<text x="641.9" y="1416.3" font-size="28.7" font-weight="normal" fill="#4e8e3c" stroke="#4e8e3c" stroke-width="0.50" textLength="176.6" lengthAdjust="spacingAndGlyphs">Taï National Park</text>
<text x="1400.8" y="1402.7" font-size="27.1" font-weight="normal" fill="#f1efe3" stroke="#f1efe3" stroke-width="3.0" textLength="83.5" lengthAdjust="spacingAndGlyphs">Aboisso</text>
<text x="1400.8" y="1402.7" font-size="27.1" font-weight="normal" fill="#4a4a4a" stroke="#4a4a4a" stroke-width="0.50" textLength="83.5" lengthAdjust="spacingAndGlyphs">Aboisso</text>
<text x="1600.0" y="1410.9" font-size="24.9" font-weight="normal" fill="#f1efe3" stroke="#f1efe3" stroke-width="3.0" textLength="72.3" lengthAdjust="spacingAndGlyphs">Prestea</text>
<text x="1600.0" y="1410.9" font-size="24.9" font-weight="normal" fill="#4a4a4a" stroke="#4a4a4a" stroke-width="0.50" textLength="72.3" lengthAdjust="spacingAndGlyphs">Prestea</text>
<text x="1707.0" y="1401.6" font-size="25.1" font-weight="normal" fill="#f1efe3" stroke="#f1efe3" stroke-width="3.0" textLength="79.3" lengthAdjust="spacingAndGlyphs">Hemang</text>
<text x="1707.0" y="1401.6" font-size="25.1" font-weight="normal" fill="#4a4a4a" stroke="#4a4a4a" stroke-width="0.50" textLength="79.3" lengthAdjust="spacingAndGlyphs">Hemang</text>
<text x="1856.0" y="1396.4" font-size="25.1" font-weight="normal" fill="#f1efe3" stroke="#f1efe3" stroke-width="3.0" textLength="67.3" lengthAdjust="spacingAndGlyphs">Afransi</text>
<text x="1856.0" y="1396.4" font-size="25.1" font-weight="normal" fill="#4a4a4a" stroke="#4a4a4a" stroke-width="0.50" textLength="67.3" lengthAdjust="spacingAndGlyphs">Afransi</text>
<text x="1953.7" y="1380.0" font-size="25.7" font-weight="normal" fill="#f1efe3" stroke="#f1efe3" stroke-width="3.0" textLength="70.0" lengthAdjust="spacingAndGlyphs">Accra</text>
<text x="1953.7" y="1380.0" font-size="25.7" font-weight="normal" fill="#4a4a4a" stroke="#4a4a4a" stroke-width="0.50" textLength="70.0" lengthAdjust="spacingAndGlyphs">Accra</text>
<text x="3037.3" y="1391.0" font-size="30.9" font-weight="normal" fill="#f1efe3" stroke="#f1efe3" stroke-width="3.0" textLength="70.7" lengthAdjust="spacingAndGlyphs">Warri</text>
<text x="3037.3" y="1391.0" font-size="30.9" font-weight="normal" fill="#4a4a4a" stroke="#4a4a4a" stroke-width="0.50" textLength="70.7" lengthAdjust="spacingAndGlyphs">Warri</text>
<text x="3218.4" y="1526.4" font-size="27.7" font-weight="normal" fill="#f1efe3" stroke="#f1efe3" stroke-width="3.0" textLength="52.6" lengthAdjust="spacingAndGlyphs">Port</text>
<text x="3218.4" y="1526.4" font-size="27.7" font-weight="normal" fill="#4a4a4a" stroke="#4a4a4a" stroke-width="0.50" textLength="52.6" lengthAdjust="spacingAndGlyphs">Port</text>
<text x="2623.3" y="1191.0" font-size="27.4" font-weight="normal" fill="#f1efe3" stroke="#f1efe3" stroke-width="3.0" textLength="81.7" lengthAdjust="spacingAndGlyphs">Ikorodu</text>
<text x="2623.3" y="1191.0" font-size="27.4" font-weight="normal" fill="#4a4a4a" stroke="#4a4a4a" stroke-width="0.50" textLength="81.7" lengthAdjust="spacingAndGlyphs">Ikorodu</text>
<text x="2986.6" y="1242.4" font-size="33.9" font-weight="normal" fill="#f1efe3" stroke="#f1efe3" stroke-width="3.0" textLength="126.9" lengthAdjust="spacingAndGlyphs">Benin City</text>
<text x="2986.6" y="1242.4" font-size="33.9" font-weight="normal" fill="#4a4a4a" stroke="#4a4a4a" stroke-width="0.50" textLength="126.9" lengthAdjust="spacingAndGlyphs">Benin City</text>
<text x="3246.0" y="1298.7" font-size="31.6" font-weight="normal" fill="#f1efe3" stroke="#f1efe3" stroke-width="3.0" textLength="44.0" lengthAdjust="spacingAndGlyphs">Nn</text>
<text x="3246.0" y="1298.7" font-size="31.6" font-weight="normal" fill="#4a4a4a" stroke="#4a4a4a" stroke-width="0.50" textLength="44.0" lengthAdjust="spacingAndGlyphs">Nn</text>
</g>
<g font-family="Liberation Sans, sans-serif" font-weight="bold">
<rect x="761.5" y="305.4" width="49.2" height="24.9" rx="4" fill="#fff" stroke="#3a3a3a" stroke-width="1.8"/>
<text x="786.1" y="323.5" font-size="15.6" fill="#333" text-anchor="middle" textLength="36.9" lengthAdjust="spacingAndGlyphs">RN7</text>
<rect x="981.7" y="410.0" width="48.6" height="24.3" rx="4" fill="#fff" stroke="#3a3a3a" stroke-width="1.8"/>
<text x="1006.0" y="427.6" font-size="15.3" fill="#333" text-anchor="middle" textLength="36.5" lengthAdjust="spacingAndGlyphs">RN7</text>
<rect x="971.7" y="511.6" width="60.7" height="23.8" rx="4" fill="#fff" stroke="#3a3a3a" stroke-width="1.8"/>
<text x="1002.0" y="528.8" font-size="14.9" fill="#333" text-anchor="middle" textLength="45.1" lengthAdjust="spacingAndGlyphs">A300</text>
<rect x="439.4" y="171.3" width="28.7" height="24.3" rx="4" fill="#fff" stroke="#3a3a3a" stroke-width="1.8"/>
<text x="453.8" y="189.0" font-size="15.3" fill="#333" text-anchor="middle" textLength="22.1" lengthAdjust="spacingAndGlyphs">5</text>
<rect x="1765.1" y="201.5" width="49.2" height="24.9" rx="4" fill="#fff" stroke="#3a3a3a" stroke-width="1.8"/>
<text x="1789.7" y="219.6" font-size="15.6" fill="#333" text-anchor="middle" textLength="36.9" lengthAdjust="spacingAndGlyphs">N 5</text>
<rect x="2119.4" y="335.9" width="60.9" height="24.3" rx="4" fill="#fff" stroke="#3a3a3a" stroke-width="1.8"/>
<text x="2149.8" y="353.6" font-size="15.3" fill="#333" text-anchor="middle" textLength="45.3" lengthAdjust="spacingAndGlyphs">N 18</text>
<rect x="1855.3" y="508.0" width="48.6" height="24.3" rx="4" fill="#fff" stroke="#3a3a3a" stroke-width="1.8"/>
<text x="1879.6" y="525.7" font-size="15.3" fill="#333" text-anchor="middle" textLength="36.5" lengthAdjust="spacingAndGlyphs">N10</text>
<rect x="2247.6" y="547.6" width="84.4" height="24.3" rx="4" fill="#fff" stroke="#3a3a3a" stroke-width="1.8"/>
<text x="2289.8" y="565.2" font-size="15.3" fill="#333" text-anchor="middle" textLength="62.2" lengthAdjust="spacingAndGlyphs">RNIE 3</text>
<rect x="2829.7" y="137.7" width="36.1" height="24.4" rx="4" fill="#fff" stroke="#3a3a3a" stroke-width="1.8"/>
<text x="2847.8" y="155.4" font-size="15.3" fill="#333" text-anchor="middle" textLength="27.4" lengthAdjust="spacingAndGlyphs">A1</text>
<rect x="2900.0" y="450.5" width="36.1" height="23.5" rx="4" fill="#fff" stroke="#3a3a3a" stroke-width="1.8"/>
<text x="2918.1" y="467.5" font-size="14.8" fill="#333" text-anchor="middle" textLength="27.4" lengthAdjust="spacingAndGlyphs">A1</text>
<rect x="3090.4" y="542.4" width="61.0" height="24.4" rx="4" fill="#fff" stroke="#3a3a3a" stroke-width="1.8"/>
<text x="3120.9" y="560.1" font-size="15.3" fill="#333" text-anchor="middle" textLength="45.3" lengthAdjust="spacingAndGlyphs">A125</text>
<rect x="705.3" y="647.8" width="48.9" height="24.3" rx="4" fill="#fff" stroke="#3a3a3a" stroke-width="1.8"/>
<text x="729.7" y="665.4" font-size="15.3" fill="#333" text-anchor="middle" textLength="36.7" lengthAdjust="spacingAndGlyphs">A12</text>
<rect x="1063.0" y="745.8" width="37.5" height="24.3" rx="4" fill="#fff" stroke="#3a3a3a" stroke-width="1.8"/>
<text x="1081.8" y="763.5" font-size="15.3" fill="#333" text-anchor="middle" textLength="28.5" lengthAdjust="spacingAndGlyphs">A3</text>
<rect x="1549.3" y="603.8" width="48.9" height="23.8" rx="4" fill="#fff" stroke="#3a3a3a" stroke-width="1.8"/>
<text x="1573.8" y="621.1" font-size="14.9" fill="#333" text-anchor="middle" textLength="36.7" lengthAdjust="spacingAndGlyphs">N12</text>
<rect x="1747.5" y="723.9" width="36.1" height="23.5" rx="4" fill="#fff" stroke="#3a3a3a" stroke-width="1.8"/>
<text x="1765.6" y="740.9" font-size="14.8" fill="#333" text-anchor="middle" textLength="27.4" lengthAdjust="spacingAndGlyphs">N7</text>
<rect x="1799.7" y="721.0" width="48.4" height="22.9" rx="4" fill="#fff" stroke="#3a3a3a" stroke-width="1.8"/>
<text x="1823.8" y="737.6" font-size="14.4" fill="#333" text-anchor="middle" textLength="36.3" lengthAdjust="spacingAndGlyphs">N10</text>
<rect x="2247.6" y="546.8" width="84.4" height="24.9" rx="4" fill="#fff" stroke="#3a3a3a" stroke-width="1.8"/>
<text x="2289.8" y="564.8" font-size="15.6" fill="#333" text-anchor="middle" textLength="62.2" lengthAdjust="spacingAndGlyphs">RNIE 3</text>
<rect x="2275.4" y="675.6" width="84.4" height="23.8" rx="4" fill="#fff" stroke="#3a3a3a" stroke-width="1.8"/>
<text x="2317.6" y="692.8" font-size="14.9" fill="#333" text-anchor="middle" textLength="62.2" lengthAdjust="spacingAndGlyphs">RNIE 3</text>
<rect x="2107.7" y="922.1" width="36.4" height="23.8" rx="4" fill="#fff" stroke="#3a3a3a" stroke-width="1.8"/>
<text x="2125.8" y="939.4" font-size="14.9" fill="#333" text-anchor="middle" textLength="27.6" lengthAdjust="spacingAndGlyphs">N2</text>
<rect x="3090.4" y="542.4" width="61.0" height="23.5" rx="4" fill="#fff" stroke="#3a3a3a" stroke-width="1.8"/>
<text x="3120.9" y="559.4" font-size="14.8" fill="#333" text-anchor="middle" textLength="45.3" lengthAdjust="spacingAndGlyphs">A125</text>
<rect x="2655.5" y="661.6" width="37.0" height="24.4" rx="4" fill="#fff" stroke="#3a3a3a" stroke-width="1.8"/>
<text x="2673.9" y="679.2" font-size="15.3" fill="#333" text-anchor="middle" textLength="28.0" lengthAdjust="spacingAndGlyphs">A7</text>
<rect x="3226.6" y="728.3" width="61.0" height="23.5" rx="4" fill="#fff" stroke="#3a3a3a" stroke-width="1.8"/>
<text x="3257.1" y="745.4" font-size="14.8" fill="#333" text-anchor="middle" textLength="45.3" lengthAdjust="spacingAndGlyphs">A124</text>
<rect x="819.2" y="1002.1" width="37.5" height="24.3" rx="4" fill="#fff" stroke="#3a3a3a" stroke-width="1.8"/>
<text x="837.9" y="1019.8" font-size="15.3" fill="#333" text-anchor="middle" textLength="28.5" lengthAdjust="spacingAndGlyphs">A5</text>
<rect x="547.2" y="1201.8" width="60.9" height="24.3" rx="4" fill="#fff" stroke="#3a3a3a" stroke-width="1.8"/>
<text x="577.6" y="1219.4" font-size="15.3" fill="#333" text-anchor="middle" textLength="45.3" lengthAdjust="spacingAndGlyphs">A701</text>
<rect x="1421.7" y="1092.0" width="59.8" height="24.3" rx="4" fill="#fff" stroke="#3a3a3a" stroke-width="1.8"/>
<text x="1451.6" y="1109.6" font-size="15.3" fill="#333" text-anchor="middle" textLength="44.5" lengthAdjust="spacingAndGlyphs">A101</text>
<rect x="1751.9" y="1056.2" width="47.8" height="23.5" rx="4" fill="#fff" stroke="#3a3a3a" stroke-width="1.8"/>
<text x="1775.8" y="1073.3" font-size="14.8" fill="#333" text-anchor="middle" textLength="35.8" lengthAdjust="spacingAndGlyphs">IR4</text>
<rect x="1173.7" y="1340.8" width="36.6" height="22.9" rx="4" fill="#fff" stroke="#3a3a3a" stroke-width="1.8"/>
<text x="1192.0" y="1357.5" font-size="14.4" fill="#333" text-anchor="middle" textLength="27.8" lengthAdjust="spacingAndGlyphs">A3</text>
<rect x="2741.9" y="955.8" width="36.1" height="15.6" rx="4" fill="#fff" stroke="#3a3a3a" stroke-width="1.8"/>
<text x="2759.9" y="967.3" font-size="10.2" fill="#333" text-anchor="middle" textLength="27.4" lengthAdjust="spacingAndGlyphs">A1</text>
<rect x="3094.8" y="951.4" width="59.5" height="24.4" rx="4" fill="#fff" stroke="#3a3a3a" stroke-width="1.8"/>
<text x="3124.5" y="969.1" font-size="15.3" fill="#333" text-anchor="middle" textLength="44.3" lengthAdjust="spacingAndGlyphs">A123</text>
<rect x="648.3" y="1542.3" width="37.7" height="24.1" rx="4" fill="#fff" stroke="#3a3a3a" stroke-width="1.8"/>
<text x="667.1" y="1559.8" font-size="15.1" fill="#333" text-anchor="middle" textLength="28.6" lengthAdjust="spacingAndGlyphs">A7</text>
<rect x="1457.0" y="1434.7" width="60.5" height="23.0" rx="4" fill="#fff" stroke="#3a3a3a" stroke-width="1.8"/>
<text x="1487.2" y="1451.4" font-size="14.5" fill="#333" text-anchor="middle" textLength="45.0" lengthAdjust="spacingAndGlyphs">A100</text>
<rect x="1789.6" y="1457.0" width="36.0" height="22.4" rx="4" fill="#fff" stroke="#3a3a3a" stroke-width="1.8"/>
<text x="1807.6" y="1473.3" font-size="14.2" fill="#333" text-anchor="middle" textLength="27.4" lengthAdjust="spacingAndGlyphs">N8</text>
<rect x="1173.3" y="1340.0" width="37.1" height="23.7" rx="4" fill="#fff" stroke="#3a3a3a" stroke-width="1.8"/>
<text x="1191.8" y="1357.2" font-size="14.9" fill="#333" text-anchor="middle" textLength="28.2" lengthAdjust="spacingAndGlyphs">A3</text>
<rect x="1227.7" y="1392.8" width="36.0" height="23.6" rx="4" fill="#fff" stroke="#3a3a3a" stroke-width="1.8"/>
<text x="1245.7" y="1409.9" font-size="14.8" fill="#333" text-anchor="middle" textLength="27.4" lengthAdjust="spacingAndGlyphs">A3</text>
<rect x="909.7" y="1378.2" width="36.1" height="23.5" rx="4" fill="#fff" stroke="#3a3a3a" stroke-width="1.8"/>
<text x="927.8" y="1395.3" font-size="14.8" fill="#333" text-anchor="middle" textLength="27.4" lengthAdjust="spacingAndGlyphs">A5</text>
<rect x="2729.2" y="1166.0" width="85.2" height="24.0" rx="4" fill="#fff" stroke="#3a3a3a" stroke-width="1.8"/>
<text x="2771.8" y="1183.4" font-size="15.1" fill="#333" text-anchor="middle" textLength="62.8" lengthAdjust="spacingAndGlyphs">A121-1</text>
<rect x="2857.3" y="1166.0" width="85.2" height="24.0" rx="4" fill="#fff" stroke="#3a3a3a" stroke-width="1.8"/>
<text x="2899.9" y="1183.4" font-size="15.1" fill="#333" text-anchor="middle" textLength="62.8" lengthAdjust="spacingAndGlyphs">A121-1</text>
</g>
<g font-family="Liberation Sans, sans-serif">
<circle cx="1592.8" cy="548.0" r="40" fill="rgba(181,226,140,0.6)"/><circle cx="1592.8" cy="548.0" r="30" fill="rgba(110,204,57,0.6)"/>
<text x="1592.8" y="556.5" font-size="24" fill="#2d2d2d" text-anchor="middle">3</text>
<circle cx="1937.7" cy="438.2" r="40" fill="rgba(181,226,140,0.6)"/><circle cx="1937.7" cy="438.2" r="30" fill="rgba(110,204,57,0.6)"/>
<text x="1937.7" y="446.7" font-size="24" fill="#2d2d2d" text-anchor="middle">4</text>
<circle cx="1916.4" cy="640.0" r="40" fill="rgba(241,211,87,0.6)"/><circle cx="1916.4" cy="640.0" r="30" fill="rgba(240,194,12,0.6)"/>
<text x="1916.4" y="648.5" font-size="24" fill="#2d2d2d" text-anchor="middle">12</text>
<circle cx="2081.8" cy="895.6" r="40" fill="rgba(181,226,140,0.6)"/><circle cx="2081.8" cy="895.6" r="30" fill="rgba(110,204,57,0.6)"/>
<text x="2081.8" y="904.1" font-size="24" fill="#2d2d2d" text-anchor="middle">5</text>
<circle cx="1701.2" cy="996.4" r="40" fill="rgba(181,226,140,0.6)"/><circle cx="1701.2" cy="996.4" r="30" fill="rgba(110,204,57,0.6)"/>
<text x="1701.2" y="1004.9" font-size="24" fill="#2d2d2d" text-anchor="middle">7</text>
<circle cx="1733.4" cy="1184.0" r="40" fill="rgba(241,211,87,0.6)"/><circle cx="1733.4" cy="1184.0" r="30" fill="rgba(240,194,12,0.6)"/>
<text x="1733.4" y="1192.5" font-size="24" fill="#2d2d2d" text-anchor="middle">51</text>
<circle cx="1588.0" cy="1376.0" r="40" fill="rgba(241,211,87,0.6)"/><circle cx="1588.0" cy="1376.0" r="30" fill="rgba(240,194,12,0.6)"/>
<text x="1588.0" y="1384.5" font-size="24" fill="#2d2d2d" text-anchor="middle">11</text>
<circle cx="1760.3" cy="1424.5" r="40" fill="rgba(241,211,87,0.6)"/><circle cx="1760.3" cy="1424.5" r="30" fill="rgba(240,194,12,0.6)"/>
<text x="1760.3" y="1433.0" font-size="24" fill="#2d2d2d" text-anchor="middle">72</text>
<circle cx="2080.6" cy="1104.0" r="40" fill="rgba(241,211,87,0.6)"/><circle cx="2080.6" cy="1104.0" r="30" fill="rgba(240,194,12,0.6)"/>
<text x="2080.6" y="1112.5" font-size="24" fill="#2d2d2d" text-anchor="middle">10</text>
<circle cx="2155.8" cy="1254.0" r="40" fill="rgba(241,211,87,0.6)"/><circle cx="2155.8" cy="1254.0" r="30" fill="rgba(240,194,12,0.6)"/>
<text x="2155.8" y="1262.5" font-size="24" fill="#2d2d2d" text-anchor="middle">25</text>
<circle cx="1985.9" cy="1377.9" r="40" fill="rgba(253,156,115,0.6)"/><circle cx="1985.9" cy="1377.9" r="30" fill="rgba(241,128,23,0.6)"/>
<text x="1985.9" y="1386.4" font-size="24" fill="#2d2d2d" text-anchor="middle">206</text>
</g>
<ellipse cx="1743.8" cy="663.7" rx="24" ry="16" fill="#000" opacity=".22" filter="url(#blur4)"/>
<ellipse cx="2114.2" cy="695.9" rx="24" ry="16" fill="#000" opacity=".22" filter="url(#blur4)"/>
<ellipse cx="1899.9" cy="900.9" rx="24" ry="16" fill="#000" opacity=".22" filter="url(#blur4)"/>
<ellipse cx="1527.7" cy="953.6" rx="24" ry="16" fill="#000" opacity=".22" filter="url(#blur4)"/>
<path d="M1751.8,667.7 L1732.8,641.5 A23.5,23.5 0 1 1 1770.8,641.5 Z" fill="#e8962c" stroke="#6b4414" stroke-width="1.3"/>
<circle cx="1751.8" cy="627.7" r="15.8" fill="#50320f" stroke="#2c1a05" stroke-width="1" stroke-dasharray="2 1.5"/>
<path d="M2122.2,699.9 L2103.2,673.7 A23.5,23.5 0 1 1 2141.2,673.7 Z" fill="#e8962c" stroke="#6b4414" stroke-width="1.3"/>
<circle cx="2122.2" cy="659.9" r="15.8" fill="#50320f" stroke="#2c1a05" stroke-width="1" stroke-dasharray="2 1.5"/>
<path d="M1907.9,904.9 L1888.9,878.7 A23.5,23.5 0 1 1 1926.9,878.7 Z" fill="#e8962c" stroke="#6b4414" stroke-width="1.3"/>
<circle cx="1907.9" cy="864.9" r="15.8" fill="#50320f" stroke="#2c1a05" stroke-width="1" stroke-dasharray="2 1.5"/>
<path d="M1535.7,957.6 L1516.7,931.4 A23.5,23.5 0 1 1 1554.7,931.4 Z" fill="#e8962c" stroke="#6b4414" stroke-width="1.3"/>
<circle cx="1535.7" cy="917.6" r="15.8" fill="#50320f" stroke="#2c1a05" stroke-width="1" stroke-dasharray="2 1.5"/>
<rect x="456" y="144" width="2822" height="16" fill="url(#topsh)"/>
<rect x="456" y="144" width="14" height="1646" fill="url(#leftsh)"/>
</svg>
<div style="position:absolute;left:20px;top:1428px;width:62px;height:68px;border-radius:7px;background:rgba(0,0,0,.2)"></div>
<div style="position:absolute;left:24px;top:1432px;width:54px;height:60px;border-radius:5px;background:#fff"></div>
<svg style="position:absolute;left:40px;top:1453px" width="24" height="22" viewBox="0 0 24 22"><path d="M12,0 L24,11 L20,11 L20,21 L14,21 L14,15 L10,15 L10,21 L4,21 L4,11 L0,11 Z" fill="#000"/></svg>
<div style="position:absolute;left:20px;top:1516px;width:68px;height:128px;border-radius:7px;background:rgba(0,0,0,.2)"></div>
<div style="position:absolute;left:24px;top:1520px;width:60px;height:120px;border-radius:5px;background:#fff"></div>
<div style="position:absolute;left:24px;top:1578px;width:60px;height:2px;background:#ccc"></div>
<div style="position:absolute;left:42px;top:1552px;width:26px;height:5px;background:#333a44"></div>
<div style="position:absolute;left:52.5px;top:1541.5px;width:5px;height:26px;background:#333a44"></div>
<div style="position:absolute;left:42px;top:1611px;width:25px;height:5px;background:#333a44"></div>
<div style="position:absolute;left:2233px;top:1625px;width:600px;height:30px;background:rgba(255,255,255,.8)"></div>
<div class="t" style="left:2243px;top:1627px;font-size:27.5px;line-height:32px;color:#3a3f44">&copy; Mapbox &copy; OpenStreetMap <b>Improve this map</b></div>

</div>
</body></html>
